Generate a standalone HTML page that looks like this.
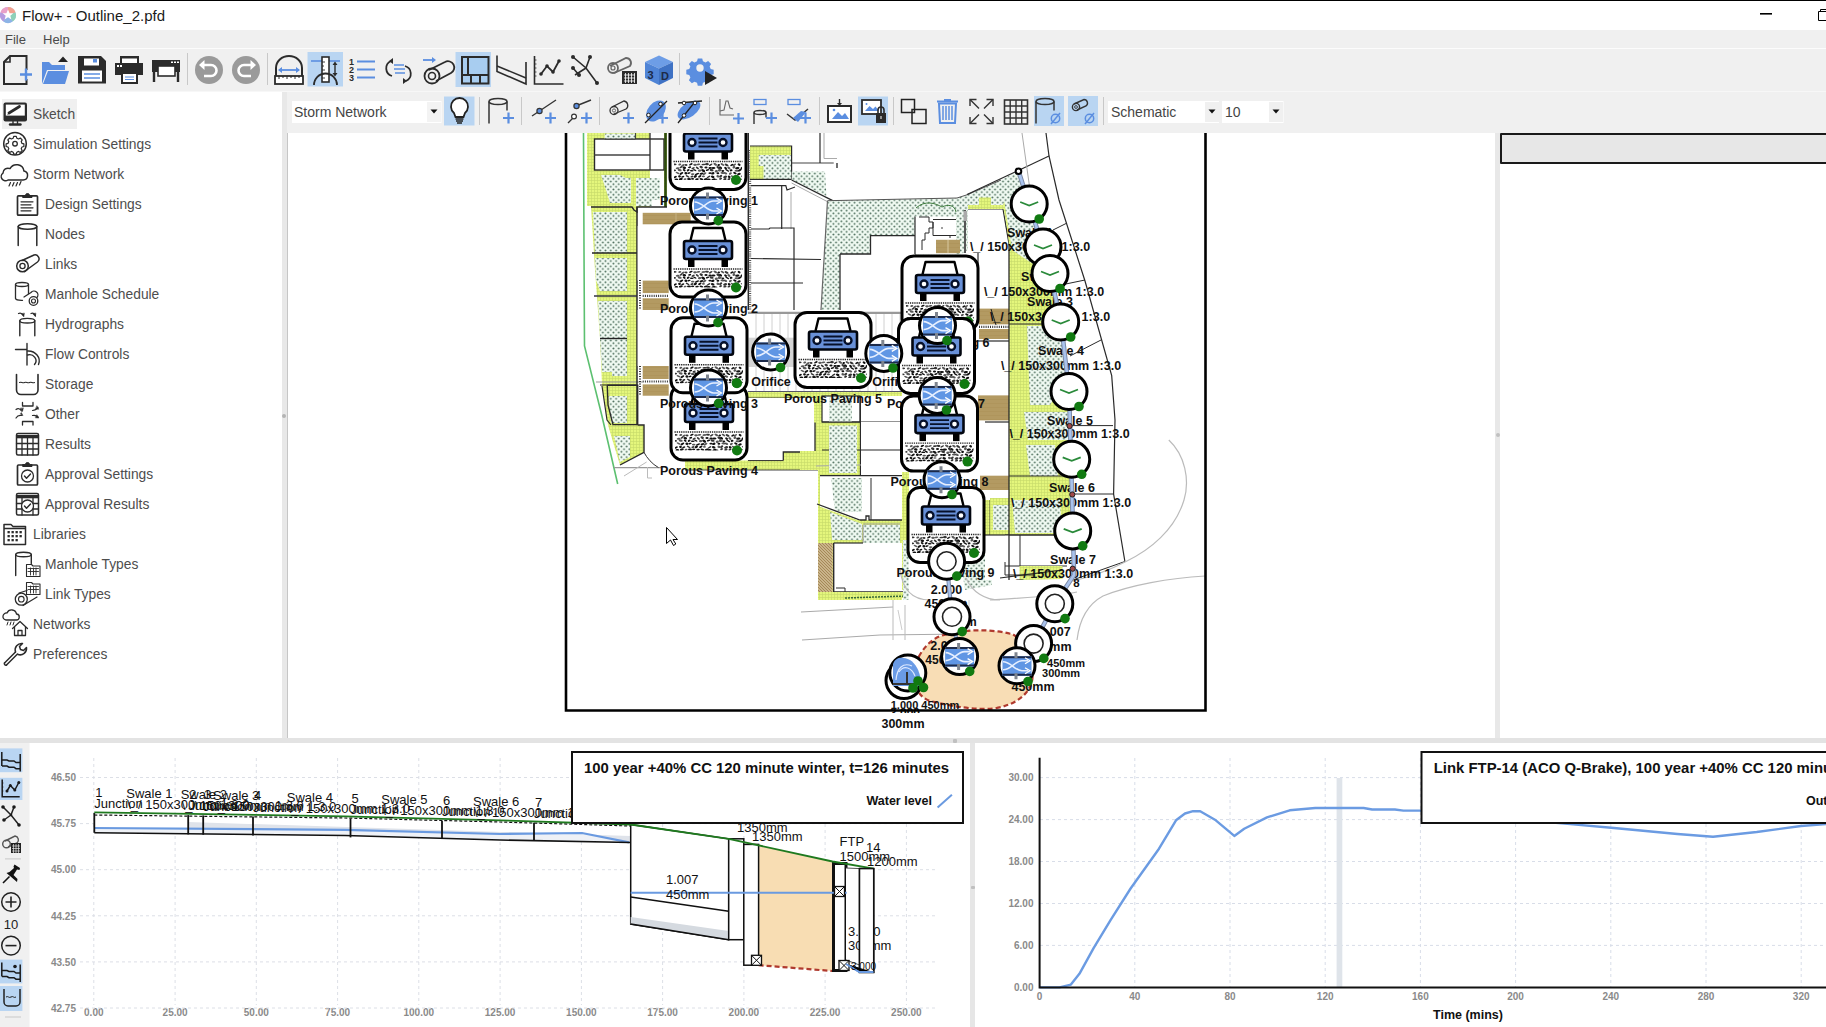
<!DOCTYPE html>
<html><head><meta charset="utf-8">
<style>
*{margin:0;padding:0;box-sizing:border-box}
html,body{width:1826px;height:1027px;overflow:hidden;background:#fff;font-family:"Liberation Sans",sans-serif;position:relative}
.a{position:absolute}
svg{position:absolute;overflow:visible}
svg text{font-family:"Liberation Sans",sans-serif}
.nav{font-size:14px;color:#4a4a4a;white-space:nowrap;line-height:16px}
</style></head><body>
<div class="a" style="left:0;top:0;width:1826px;height:30px;background:#fff;border-top:1px solid #000"></div>
<div class="a" style="left:0;top:30px;width:1826px;height:18px;background:#f0f0f0"></div>
<div class="a" style="left:0;top:48px;width:1826px;height:1px;background:#fcfcfc"></div>
<div class="a" style="left:0;top:49px;width:1826px;height:42px;background:#f0f0f0"></div>
<div class="a" style="left:0;top:91px;width:1826px;height:1px;background:#f7f7f7"></div>
<div class="a" style="left:0;top:92px;width:282px;height:646px;background:#fff"></div>
<div class="a" style="left:282px;top:92px;width:5px;height:646px;background:#e8e8e8"></div>
<div class="a" style="left:287px;top:92px;width:1539px;height:41px;background:#f0f0f0"></div>
<div class="a" style="left:287px;top:133px;width:1208px;height:605px;background:#fff"></div>
<div class="a" style="left:1495px;top:133px;width:5px;height:605px;background:#e8e8e8"></div>
<div class="a" style="left:1500px;top:133px;width:326px;height:605px;background:#fff"></div>
<div class="a" style="left:0;top:738px;width:1826px;height:5px;background:#e3e3e3"></div>
<div class="a" style="left:0;top:743px;width:970px;height:284px;background:#fff"></div>
<div class="a" style="left:970px;top:743px;width:5px;height:284px;background:#e6e6e6"></div>
<div class="a" style="left:975px;top:743px;width:851px;height:284px;background:#fff"></div>
<div class="a" style="left:287px;top:133px;width:1px;height:605px;background:#c6c6c6"></div>
<div class="a" style="left:282px;top:414px;width:4px;height:4px;border-radius:2px;background:#b4b4b4"></div>
<div class="a" style="left:1495.5px;top:433px;width:4px;height:4px;border-radius:2px;background:#c0c0c0"></div>
<div class="a" style="left:953px;top:738.5px;width:4px;height:4px;border-radius:1px;background:#c0c0c0"></div>
<div class="a" style="left:970.5px;top:885.5px;width:4px;height:3px;border-radius:1px;background:#c0c0c0"></div>

<svg style="left:0;top:0" width="1826" height="49" viewBox="0 0 1826 49">
<g transform="translate(8,15)">
<circle r="7.8" fill="#9fb7e0"/>
<path d="M0,0 L0,-8 A8,8 0 0 1 7.6,-2.5 Z" fill="#f2a08f"/>
<path d="M0,0 L7.6,-2.5 A8,8 0 0 1 4.7,6.5 Z" fill="#8fd0b8"/>
<path d="M0,0 L4.7,6.5 A8,8 0 0 1 -4.7,6.5 Z" fill="#8db4e6"/>
<path d="M0,0 L-4.7,6.5 A8,8 0 0 1 -7.6,-2.5 Z" fill="#b59be0"/>
<path d="M0,0 L-7.6,-2.5 A8,8 0 0 1 0,-8 Z" fill="#e9a0c8"/>
<path d="M0,-5.5 L1.6,-1.7 L5.3,-1.7 L2.3,0.8 L3.4,4.6 L0,2.3 L-3.4,4.6 L-2.3,0.8 L-5.3,-1.7 L-1.6,-1.7 Z" fill="#fff"/>
</g>
<text x="22" y="21" font-size="15" fill="#1a1a1a">Flow+ - Outline_2.pfd</text>
<rect x="1760" y="13" width="12" height="1.6" fill="#000"/>
<path d="M1818.5,11.5 h12 v9 h-12 z M1820.5,11.5 v-2 h12" fill="none" stroke="#000" stroke-width="1"/>
<text x="5" y="44" font-size="13" fill="#4a4a4a">File</text>
<text x="43" y="44" font-size="13" fill="#4a4a4a">Help</text>
</svg>

<div class="a" style="left:1.5px;top:99px;width:75px;height:30px;background:#f0f0f0"></div>
<svg style="left:0;top:92px" width="282" height="646" viewBox="0 92 282 646">
<text x="33" y="119" font-size="13.8" fill="#4d4d4d">Sketch</text>
<text x="33" y="149" font-size="13.8" fill="#4d4d4d">Simulation Settings</text>
<text x="33" y="179" font-size="13.8" fill="#4d4d4d">Storm Network</text>
<text x="45" y="209" font-size="13.8" fill="#4d4d4d">Design Settings</text>
<text x="45" y="239" font-size="13.8" fill="#4d4d4d">Nodes</text>
<text x="45" y="269" font-size="13.8" fill="#4d4d4d">Links</text>
<text x="45" y="299" font-size="13.8" fill="#4d4d4d">Manhole Schedule</text>
<text x="45" y="329" font-size="13.8" fill="#4d4d4d">Hydrographs</text>
<text x="45" y="359" font-size="13.8" fill="#4d4d4d">Flow Controls</text>
<text x="45" y="389" font-size="13.8" fill="#4d4d4d">Storage</text>
<text x="45" y="419" font-size="13.8" fill="#4d4d4d">Other</text>
<text x="45" y="449" font-size="13.8" fill="#4d4d4d">Results</text>
<text x="45" y="479" font-size="13.8" fill="#4d4d4d">Approval Settings</text>
<text x="45" y="509" font-size="13.8" fill="#4d4d4d">Approval Results</text>
<text x="33" y="539" font-size="13.8" fill="#4d4d4d">Libraries</text>
<text x="45" y="569" font-size="13.8" fill="#4d4d4d">Manhole Types</text>
<text x="45" y="599" font-size="13.8" fill="#4d4d4d">Link Types</text>
<text x="33" y="629" font-size="13.8" fill="#4d4d4d">Networks</text>
<text x="33" y="659" font-size="13.8" fill="#4d4d4d">Preferences</text>

<g fill="none" stroke="#2b2b2b" stroke-width="1.6" stroke-linecap="round" stroke-linejoin="round">
<!-- sketch monitor -->
<rect x="3.5" y="102.5" width="23.5" height="19" rx="2" fill="#2b2b2b" stroke="none"/>
<rect x="5.8" y="104.6" width="19" height="11" fill="#fff" stroke="none"/>
<path d="M10,124.5 h10.5" stroke-width="2.4"/><path d="M13,121.5 v2 M17.5,121.5 v2" stroke-width="1.4"/>
<path d="M9,113 L19.5,106.5" stroke-width="2.8"/><path d="M8,114.3 l1.6,-2" stroke-width="1"/>
<!-- gear circle -->
<circle cx="15" cy="143.7" r="11.3" stroke-width="1.5"/>
<circle cx="15" cy="143.7" r="2.3" stroke-width="1.3"/>
<path d="M13.7,136.3 h2.6 l0.5,1.9 l1.8,0.8 l1.7,-1 l1.9,1.9 l-1,1.7 l0.8,1.8 l1.9,0.5 v2.6 l-1.9,0.5 l-0.8,1.8 l1,1.7 l-1.9,1.9 l-1.7,-1 l-1.8,0.8 l-0.5,1.9 h-2.6 l-0.5,-1.9 l-1.8,-0.8 l-1.7,1 l-1.9,-1.9 l1,-1.7 l-0.8,-1.8 l-1.9,-0.5 v-2.6 l1.9,-0.5 l0.8,-1.8 l-1,-1.7 l1.9,-1.9 l1.7,1 l1.8,-0.8 Z" stroke-width="1.2"/>
<!-- cloud -->
<path d="M8,180 h15 a4.5,4.5 0 0 0 1,-8.9 a7.5,7.5 0 0 0 -14,-2.5 a5,5 0 0 0 -7,4.5 a4,4 0 0 0 5,6.9 Z" stroke-width="1.5"/>
<path d="M10.5,182.5 l-1.5,3.5 M14,182.5 l-1.5,3.5 M17.5,182.5 l-1.5,3.5 M21,181.5 l-1.5,3.5" stroke-width="1.2"/>
<!-- clipboard -->
<rect x="17.5" y="195.8" width="20" height="19.4" rx="1" stroke-width="1.7"/>
<path d="M23,197.5 h9 v-2 h-2.5 a2,2 0 0 0 -4,0 h-2.5 z" fill="#2b2b2b" stroke-width="1"/>
<path d="M21,201.8 h12 M21,204.8 h10 M21,207.8 h12 M21,210.8 h10" stroke-width="1.2"/>
<!-- cylinder -->
<ellipse cx="27.5" cy="226.5" rx="9.3" ry="2.8" stroke-width="1.5"/>
<path d="M18.2,226.5 v19 M36.8,226.5 v19" stroke-width="1.5"/>
<!-- links pipe -->
<path d="M22,260.5 L34,255 a4,4 0 0 1 3.5,7 L24.5,271.5" stroke-width="1.5"/>
<circle cx="22.5" cy="266" r="5.8" stroke-width="1.5"/><circle cx="22.5" cy="266" r="2.6" stroke-width="1.3"/>
<!-- manhole schedule -->
<ellipse cx="22" cy="284.5" rx="6.5" ry="2" stroke-width="1.3"/>
<path d="M15.5,284.5 v14 a6.5,2 0 0 0 7,1.8 M28.5,284.5 v10" stroke-width="1.3"/>
<path d="M24,297 L31,292.5 a3.5,3.5 0 0 1 6,5 L30,303" stroke-width="1.3" fill="#fff"/>
<circle cx="33.5" cy="301" r="4.3" fill="#fff" stroke-width="1.3"/><circle cx="33.5" cy="301" r="2" stroke-width="1.1"/>
<!-- hydrographs -->
<path d="M18.5,313.5 c2,-1 4,0 5,2.5 M31,313.5 c2,-1 4,0 4.5,2.5" stroke-width="1.2"/>
<path d="M21.5,314 l2.3,2.5 l0.5,-3 z M33,314 l2.3,2.5 l0.5,-3 z" fill="#2b2b2b" stroke-width="0.6"/>
<ellipse cx="27.3" cy="320.7" rx="7.5" ry="2.3" stroke-width="1.4"/>
<path d="M19.8,320.7 v15 M34.8,320.7 v15" stroke-width="1.4"/>
<!-- flow controls -->
<path d="M15.5,349.5 h11.5 M27,343.5 v21.5" stroke-width="1.4"/>
<path d="M27.5,351 a11,10 0 0 1 11,13.5 M27.5,355 a6.5,6 0 0 1 7,9.5" stroke-width="1.4"/>
<!-- storage -->
<path d="M16.5,374.5 v15.5 a4.5,4.5 0 0 0 4.5,4.5 h12.5 a4.5,4.5 0 0 0 4.5,-4.5 v-15.5" stroke-width="1.6"/>
<path d="M19.5,382.5 c2,-1 3,1 5,0 c2,-1 3,1 5,0 c2,-1 3,1 5,0" stroke-width="1.1"/>
<!-- other -->
<path d="M22.5,402.5 v3.5 h10.5 v-3.5 M22.5,425 v-3.5 h10.5 v3.5" stroke-width="1.3"/>
<path d="M16,409.5 c2,-1.5 4,-1 5.5,1.5 M16,418 c1.5,-2.5 3.5,-3 5.5,-2.5 M32.5,410.5 c2,0 4,-1 5.5,-3 M32.5,415.5 c2,-0.5 4,0 5.5,1.5" stroke-width="1.2"/><path d="M20.5,408.5 l2,3 l0.8,-3.3 z M20.5,414 l2.5,1.8 l-1.5,-3 z M37,406 l1.8,3.2 l-3,-0.2 z M37,415 l1.8,3 l-3.2,-0.2 z" fill="#2b2b2b" stroke-width="0.5"/>
<!-- results grid -->
<rect x="16.5" y="433.5" width="22" height="21.5" rx="1.5" stroke-width="1.5"/>
<path d="M16.5,435 h22 v3.3 h-22 z" fill="#2b2b2b" stroke="none"/>
<path d="M16.5,443.5 h22 M16.5,449 h22 M22,438 v17 M27.5,438 v17 M33,438 v17" stroke-width="1.3"/>
<!-- approval settings -->
<rect x="17.5" y="465" width="20" height="20" rx="1" stroke-width="1.7"/>
<path d="M23,466.5 h9 v-2 h-2.5 a2,2 0 0 0 -4,0 h-2.5 z" fill="#2b2b2b" stroke-width="1"/>
<circle cx="27.5" cy="476" r="6" stroke-width="1.3"/><path d="M24.5,476 l2,2.3 l4,-4.3" stroke-width="1.4"/>
<!-- approval results -->
<rect x="16.5" y="493.5" width="22" height="21.5" rx="1.5" stroke-width="1.5"/>
<path d="M16.5,495 h22 v3.3 h-22 z" fill="#2b2b2b" stroke="none"/>
<path d="M16.5,503.5 h22 M16.5,509 h22 M22,498 v17 M33,498 v17" stroke-width="1.3"/>
<circle cx="27.5" cy="506" r="6" fill="#fff" stroke-width="1.3"/><path d="M24.5,506 l2,2.3 l4,-4.3" stroke-width="1.4"/>
<!-- libraries -->
<path d="M4,544.5 v-20 h7 l2,2 h12.5 v18 z M4,528.5 h21.5" stroke-width="1.5"/>
<g fill="#2b2b2b" stroke="none"><rect x="7.5" y="531" width="2.3" height="2.3"/><rect x="11.5" y="531" width="2.3" height="2.3"/><rect x="15.5" y="531" width="2.3" height="2.3"/><rect x="19.5" y="531" width="2.3" height="2.3"/><rect x="7.5" y="535" width="2.3" height="2.3"/><rect x="11.5" y="535" width="2.3" height="2.3"/><rect x="15.5" y="535" width="2.3" height="2.3"/><rect x="19.5" y="535" width="2.3" height="2.3"/><rect x="7.5" y="539" width="2.3" height="2.3"/><rect x="11.5" y="539" width="2.3" height="2.3"/><rect x="15.5" y="539" width="2.3" height="2.3"/></g>
<!-- manhole types -->
<ellipse cx="23.5" cy="554.5" rx="7.8" ry="2.3" stroke-width="1.4"/>
<path d="M15.7,554.5 v21 M31.3,554.5 v9" stroke-width="1.4"/>
<path d="M26.5,576.5 v-12 h5 l1.5,1.5 h7 v10.5 z" fill="#fff" stroke-width="1.1"/>
<path d="M28,568.5 h10.5 M28,571.5 h10.5 M30.5,568 v7 M33.5,568 v7 M36,568 v7" stroke-width="0.9"/>
<!-- link types -->
<path d="M26.5,594.5 v-12 h5 l1.5,1.5 h7 v10.5 z" fill="#fff" stroke-width="1.1"/>
<path d="M28,586.5 h10.5 M28,589.5 h10.5 M30.5,586 v7 M33.5,586 v7 M36,586 v7" stroke-width="0.9"/>
<path d="M19,593 L27,590.5 M23,605.5 L37,597" stroke-width="1.2"/>
<circle cx="21.3" cy="599.2" r="6" stroke-width="1.3"/><circle cx="21.3" cy="599.2" r="2.8" stroke-width="1.1"/>
<!-- networks -->
<path d="M6,620 h10 a3,3 0 0 0 0.5,-6 a5,5 0 0 0 -9.5,-1 a3.2,3.2 0 0 0 -1,7 z" stroke-width="1.3"/>
<path d="M8,622 l-1,3 M11,622 l-1,3 M14,622 l-1,3" stroke-width="1"/>
<path d="M12.5,628.5 L20,621.5 L27.5,628.5 M14.5,626.5 v9 h11 v-9 M18,635.5 v-5 h4 v5" stroke-width="1.3"/>
<!-- preferences wrench -->
<path d="M4.5,663 L15.5,652 M6.5,665 L17.5,654" stroke-width="1.5"/>
<path d="M4.5,663 a1.5,1.5 0 0 0 2,2" stroke-width="1.5"/>
<path d="M15.5,652 a6.5,6.5 0 0 1 7,-8.5 l-3,3 l1,3 l3,1 l3,-3 a6.5,6.5 0 0 1 -8.5,7" stroke-width="1.5"/>
</g>
</svg>

<svg style="left:0;top:49px" width="1826" height="43" viewBox="0 49 1826 43">
<!-- highlights -->
<rect x="307.5" y="52" width="35.5" height="34.5" fill="#b9d5f2"/>
<rect x="455.5" y="52" width="35.5" height="35" fill="#b9d5f2"/>
<!-- separators -->
<rect x="187" y="53" width="1" height="32" fill="#c8c8c8"/>
<rect x="267" y="53" width="1" height="32" fill="#c8c8c8"/>
<rect x="679" y="53" width="1" height="32" fill="#c8c8c8"/>
<!-- new doc -->
<path d="M4,62 L10,56 L26.5,56 L26.5,84 L4,84 Z" fill="none" stroke="#2b2b2b" stroke-width="2"/>
<path d="M4,62 L10,62 L10,56" fill="none" stroke="#2b2b2b" stroke-width="1.6"/>
<rect x="19" y="70" width="13" height="9" fill="#f0f0f0"/>
<path d="M20,74.5 h12 M26,68.5 v12" stroke="#5b8ee0" stroke-width="2.4"/>
<!-- open folder -->
<path d="M42,84 L42,62 L49,62 L52,65 L65,65 L65,70 L47,70 L42,84 Z" fill="#5b8ee0"/>
<path d="M43,84 L48,71 L69,71 L65,84 Z" fill="#5b8ee0"/>
<path d="M58,62 L63,56.5 L68,62 Z" fill="#222"/>
<!-- save -->
<path d="M78,56 L101,56 L106,61 L106,83.5 L78,83.5 Z" fill="#2b2b2b"/>
<rect x="84" y="58.5" width="15" height="7" fill="#fff"/>
<rect x="93" y="59" width="4" height="3.5" fill="#5b8ee0"/>
<rect x="82" y="70.5" width="20" height="11" fill="#fff"/>
<path d="M84,74 h16 M84,78 h16" stroke="#5b8ee0" stroke-width="1.6"/>
<!-- print -->
<rect x="120" y="56" width="19" height="7" fill="#2b2b2b"/>
<rect x="122" y="58.5" width="15" height="4.5" fill="#fff"/>
<rect x="115" y="63" width="28" height="12" fill="#2b2b2b"/>
<rect x="117" y="65" width="2" height="2" fill="#fff"/><rect x="120" y="65" width="2" height="2" fill="#fff"/>
<rect x="121" y="71" width="17" height="13" fill="#2b2b2b"/>
<rect x="123" y="74" width="13" height="8" fill="#fff"/>
<path d="M125,77 h9 M125,79.5 h9" stroke="#5b8ee0" stroke-width="1.2"/>
<!-- plotter -->
<rect x="152" y="60" width="28" height="12" fill="#2b2b2b"/>
<rect x="171" y="61.5" width="2" height="1.5" fill="#fff"/><rect x="174" y="61.5" width="2" height="1.5" fill="#fff"/><rect x="177" y="61.5" width="2" height="1.5" fill="#fff"/>
<rect x="158" y="66" width="17" height="10" fill="#fff" stroke="#2b2b2b" stroke-width="1.6"/>
<path d="M154,72 v10 M178,72 v10" stroke="#2b2b2b" stroke-width="2.4"/>
<!-- undo / redo -->
<circle cx="209" cy="70" r="14" fill="#9a9a9a"/>
<path d="M202,65 h9 a5.5,5.5 0 0 1 0,11 h-7" fill="none" stroke="#fff" stroke-width="2.6"/>
<path d="M199,65 L204.5,60 L204.5,70 Z" fill="#fff"/>
<circle cx="246" cy="70" r="14" fill="#9a9a9a"/>
<path d="M253,65 h-9 a5.5,5.5 0 0 0 0,11 h7" fill="none" stroke="#fff" stroke-width="2.6"/>
<path d="M256,65 L250.5,60 L250.5,70 Z" fill="#fff"/>
<!-- measure dome -->
<path d="M276,76 L276,68 A13,12 0 0 1 302,68 L302,76" fill="none" stroke="#2b2b2b" stroke-width="2"/>
<rect x="275" y="76" width="28" height="8" fill="#fff" stroke="#2b2b2b" stroke-width="1.8"/>
<path d="M279,76 v3 M283,76 v2 M287,76 v3 M291,76 v2 M295,76 v3 M299,76 v2" stroke="#2b2b2b" stroke-width="1"/>
<path d="M279,70 h20" stroke="#5b8ee0" stroke-width="1.8"/>
<path d="M278,70 l4,-3 v6 z M300,70 l-4,-3 v6 z" fill="#5b8ee0"/>
<!-- ruler (highlighted) -->
<path d="M311,61 h29" stroke="#5b8ee0" stroke-width="1.6"/>
<rect x="322" y="57" width="7" height="25" fill="#fff" stroke="#2b2b2b" stroke-width="1.6"/>
<path d="M322,62 h3 M322,66 h2 M322,70 h3 M322,74 h2 M322,78 h3" stroke="#2b2b2b" stroke-width="0.9"/>
<path d="M314,85 A11,11 0 0 1 337,85" fill="none" stroke="#2b2b2b" stroke-width="1.8"/>
<path d="M335,63 v12" stroke="#2b2b2b" stroke-width="1.4"/>
<path d="M332.5,65 L335,61.5 L337.5,65 Z M332.5,73 L335,76.5 L337.5,73 Z" fill="#2b2b2b"/>
<!-- numbered list -->
<text x="349" y="65" font-size="9" font-weight="bold" fill="#2b2b2b">1</text>
<text x="349" y="73" font-size="9" font-weight="bold" fill="#2b2b2b">2</text>
<text x="349" y="81" font-size="9" font-weight="bold" fill="#2b2b2b">3</text>
<path d="M357,61.5 h18 M357,69.5 h18 M357,77.5 h18" stroke="#5b8ee0" stroke-width="2"/>
<!-- link loop -->
<path d="M391,61 A8,8 0 0 0 392,76" fill="none" stroke="#2b2b2b" stroke-width="1.8"/>
<path d="M405,66 A8,8 0 0 1 406,81" fill="none" stroke="#2b2b2b" stroke-width="1.8"/>
<path d="M389,61 l4,-3 v6z M407,81 l-4,-3 v6z" fill="#2b2b2b"/>
<path d="M394,65 h10 M394,69 h11 M395,73 h10" stroke="#5b8ee0" stroke-width="1.6"/>
<!-- pipe w arrow -->
<path d="M423,60 h10" stroke="#5b8ee0" stroke-width="1.8"/><path d="M432,57 l4,3 l-4,3z" fill="#5b8ee0"/>
<path d="M429,70 L445,62 A6,6 0 0 1 451,73 L436,81" fill="none" stroke="#2b2b2b" stroke-width="1.8"/>
<circle cx="432" cy="76" r="7.5" fill="none" stroke="#2b2b2b" stroke-width="1.8"/>
<circle cx="432" cy="76" r="3.5" fill="none" stroke="#2b2b2b" stroke-width="1.6"/>
<!-- layout (highlighted) -->
<rect x="462" y="57" width="26.5" height="26.5" fill="#a8cdf0" stroke="#2b2b2b" stroke-width="2"/>
<path d="M468,57 v18.5 M462,75 h26.5 M471,75 v8.5 M480,75 v8.5" stroke="#2b2b2b" stroke-width="2"/>
<!-- profile -->
<path d="M497,55.5 v16 L526,84 v-22" fill="none" stroke="#2b2b2b" stroke-width="1.6"/>
<path d="M497,66 L526,78" stroke="#2b2b2b" stroke-width="1.4"/>
<!-- chart -->
<path d="M534.5,56 v28 h29" fill="none" stroke="#2b2b2b" stroke-width="1.6"/>
<path d="M534.5,60 h2 M534.5,64 h2 M534.5,68 h2 M534.5,72 h2 M534.5,76 h2" stroke="#2b2b2b" stroke-width="0.8"/>
<path d="M541,74 L547,66 L553,72 L559,61" fill="none" stroke="#2b2b2b" stroke-width="1.8"/>
<circle cx="541" cy="74" r="1.8" fill="#2b2b2b"/><circle cx="547" cy="66" r="1.8" fill="#2b2b2b"/><circle cx="553" cy="72" r="1.8" fill="#2b2b2b"/><circle cx="559" cy="61" r="1.8" fill="#2b2b2b"/>
<!-- network -->
<path d="M573,57 L586,68 L597,83 M586,68 L590,57 M586,68 L575,75 M573,68 L579,75" fill="none" stroke="#2b2b2b" stroke-width="1.6"/>
<circle cx="573" cy="57" r="2" fill="#2b2b2b"/><circle cx="590" cy="57" r="2" fill="#2b2b2b"/>
<circle cx="573" cy="68" r="2" fill="#2b2b2b"/><circle cx="579" cy="75" r="2" fill="#2b2b2b"/>
<circle cx="597" cy="83" r="2" fill="#2b2b2b"/>
<!-- pipe calendar -->
<path d="M610,66 L626,58 A5,5 0 0 1 630,66 L614,73" fill="none" stroke="#666" stroke-width="1.8"/>
<circle cx="613" cy="68" r="5" fill="none" stroke="#666" stroke-width="1.8"/><circle cx="613" cy="68" r="2" fill="none" stroke="#666" stroke-width="1.2"/>
<rect x="622" y="71" width="15" height="13" fill="#2b2b2b"/>
<path d="M624,75 h11 M624,78 h11 M624,81 h11 M625.5,73 v10 M628.5,73 v10 M631.5,73 v10 M634.5,73 v10" stroke="#fff" stroke-width="0.8"/>
<!-- 3D cube -->
<path d="M659,55.5 L673,62 L659,68.5 L645,62 Z" fill="#6d9de6"/>
<path d="M645,62 L659,68.5 L659,85 L645,78 Z" fill="#4f84d6"/>
<path d="M673,62 L659,68.5 L659,85 L673,78 Z" fill="#3f72c4"/>
<text x="647.5" y="79" font-size="11" font-weight="bold" fill="#1d2a48">3</text>
<text x="661" y="80" font-size="11" font-weight="bold" fill="#1d2a48">D</text>
<!-- gear play -->
<g transform="translate(700,68) scale(0.74)">
<path d="M-3,-13 h6 l1,4 l3.5,1.5 l3.5,-2 l4,4 l-2,3.5 l1.5,3.5 l4,1 v6 l-4,1 l-1.5,3.5 l2,3.5 l-4,4 l-3.5,-2 l-3.5,1.5 l-1,4 h-6 l-1,-4 l-3.5,-1.5 l-3.5,2 l-4,-4 l2,-3.5 l-1.5,-3.5 l-4,-1 v-6 l4,-1 l1.5,-3.5 l-2,-3.5 l4,-4 l3.5,2 l3.5,-1.5 Z" fill="#5b8ee0"/>
<circle r="5" fill="#f0f0f0"/>
</g>
<path d="M705,71 L717,78 L705,85 Z" fill="#222"/>
</svg>

<svg style="left:287px;top:92px" width="1539" height="41" viewBox="287 92 1539 41">
<!-- dropdowns -->
<rect x="292" y="101" width="149.5" height="22" fill="#fff"/>
<rect x="427" y="102" width="14" height="20" fill="#f3f3f3"/>
<path d="M430.5,109.5 h7 l-3.5,4 z" fill="#111"/>
<text x="294" y="116.5" font-size="14" fill="#454545">Storm Network</text>
<rect x="1108" y="101" width="111" height="22" fill="#fff"/>
<rect x="1205" y="102" width="14" height="20" fill="#f0f0f0"/>
<path d="M1208.5,109.5 h7 l-3.5,4 z" fill="#111"/>
<text x="1111" y="116.5" font-size="14" fill="#454545">Schematic</text>
<rect x="1222" y="101" width="61.5" height="22" fill="#fff"/>
<rect x="1269" y="102" width="14" height="20" fill="#f0f0f0"/>
<path d="M1272.5,109.5 h7 l-3.5,4 z" fill="#111"/>
<text x="1225" y="116.5" font-size="14" fill="#454545">10</text>
<!-- highlights -->
<rect x="444" y="96.5" width="30.5" height="29" fill="#b9d5f2"/>
<rect x="858" y="96.5" width="30" height="29" fill="#b9d5f2"/>
<rect x="1034" y="96" width="30" height="30" fill="#b9d5f2"/>
<rect x="1068" y="96" width="30" height="30" fill="#b9d5f2"/>
<!-- separators -->
<g fill="#c8c8c8"><rect x="479" y="97" width="1" height="28"/><rect x="521" y="97" width="1" height="28"/><rect x="599" y="97" width="1" height="28"/><rect x="709" y="97" width="1" height="28"/><rect x="819" y="97" width="1" height="28"/><rect x="893" y="97" width="1" height="28"/><rect x="1103" y="97" width="1" height="28"/></g>
<!-- bulb -->
<path d="M454,113 A8.5,8.5 0 1 1 465,113 L463.5,117 h-8 Z" fill="#fff" stroke="#222" stroke-width="1.8"/>
<path d="M455.5,119 h8 M456,121 h7" stroke="#222" stroke-width="1.3"/><path d="M457,123 h5" stroke="#222" stroke-width="1.5"/>
<!-- node + -->
<ellipse cx="498" cy="101.5" rx="9" ry="3" fill="none" stroke="#333" stroke-width="1.5"/>
<path d="M489,101.5 v22 M507,101.5 v9" stroke="#333" stroke-width="1.5"/>
<path d="M503,118 h11 M508.5,112.5 v11" stroke="#5b8ee0" stroke-width="2.2"/>
<!-- link + -->
<path d="M532,116 L556,100" stroke="#333" stroke-width="1.4"/><circle cx="539.5" cy="111" r="2.6" fill="#5b8ee0" stroke="#333" stroke-width="1.2"/>
<path d="M545,118 h11 M550.5,112.5 v11" stroke="#5b8ee0" stroke-width="2.2"/>
<!-- link node + -->
<path d="M576,106 L591,100 M568,123 L575,116" stroke="#333" stroke-width="1.4"/><circle cx="576.5" cy="106" r="2.6" fill="#5b8ee0" stroke="#333" stroke-width="1.2"/><circle cx="574" cy="116.5" r="2.4" fill="#fff" stroke="#333" stroke-width="1.2"/>
<path d="M581,118 h11 M586.5,112.5 v11" stroke="#5b8ee0" stroke-width="2.2"/>
<!-- pipe + -->
<path d="M612,107 L624,101 A4.5,4.5 0 0 1 626,109 L614,114" fill="none" stroke="#333" stroke-width="1.3"/>
<circle cx="614" cy="110.5" r="4" fill="none" stroke="#333" stroke-width="1.3"/><circle cx="614" cy="110.5" r="1.6" fill="none" stroke="#555" stroke-width="0.9"/>
<path d="M623,118 h11 M628.5,112.5 v11" stroke="#5b8ee0" stroke-width="2.2"/>
<!-- ellipse link + -->
<ellipse cx="656" cy="111" rx="8" ry="12" transform="rotate(40 656 111)" fill="#5b8ee0"/>
<path d="M645,123 L667,101" stroke="#222" stroke-width="1.3"/><circle cx="648.5" cy="115" r="1.8" fill="#fff" stroke="#222"/><circle cx="660.5" cy="104" r="1.8" fill="#fff" stroke="#222"/>
<path d="M657,118 h11 M662.5,112.5 v11" stroke="#5b8ee0" stroke-width="2.2"/>
<!-- ellipse 2 -->
<ellipse cx="689" cy="110" rx="7" ry="13" transform="rotate(55 689 110)" fill="#5b8ee0"/>
<path d="M678,123 L694,103 M678,103 L702,101" stroke="#222" stroke-width="1.3"/><circle cx="684" cy="115.5" r="1.8" fill="#fff" stroke="#222"/><circle cx="684" cy="103" r="1.8" fill="#fff" stroke="#222"/><circle cx="695" cy="103" r="1.8" fill="#fff" stroke="#222"/>
<!-- hydrograph + -->
<path d="M720,99 v16 h14" fill="none" stroke="#666" stroke-width="1.1"/><path d="M720,111 L724,110 L726,101 L728,101 L730,108 L733,109" fill="none" stroke="#666" stroke-width="1.1"/>
<path d="M733,118.5 h11 M738.5,113 v11" stroke="#5b8ee0" stroke-width="2.2"/>
<!-- node rect + -->
<rect x="754" y="99.5" width="12" height="5" fill="none" stroke="#5b8ee0" stroke-width="1.3"/>
<ellipse cx="760" cy="112.5" rx="6" ry="2" fill="none" stroke="#333" stroke-width="1.4"/><path d="M754,112.5 v11.5 M766,112.5 v5" fill="none" stroke="#333" stroke-width="1.4"/>
<path d="M766,118 h11 M771.5,112.5 v11" stroke="#5b8ee0" stroke-width="2.2"/>
<!-- swale + -->
<rect x="788" y="99.5" width="12" height="5" fill="none" stroke="#5b8ee0" stroke-width="1.3"/>
<path d="M787,114 L795,120 L808,109" fill="none" stroke="#333" stroke-width="1.4"/><path d="M793,118 L798,122 L806,112 L801,111 Z" fill="#5b8ee0"/>
<path d="M800,118 h11 M805.5,112.5 v11" stroke="#5b8ee0" stroke-width="2.2"/>
<!-- image import -->
<rect x="828" y="106" width="23" height="16" fill="#fff" stroke="#2b2b2b" stroke-width="2"/>
<path d="M832,119 L838,112 L842,116 L845,113 L849,119 Z" fill="#5b8ee0"/><circle cx="834" cy="110" r="1.3" fill="#5b8ee0"/>
<path d="M839.5,99 v5" stroke="#2b2b2b" stroke-width="1.4"/><path d="M837,103 h5 l-2.5,3 z" fill="#2b2b2b"/>
<!-- image lock -->
<rect x="862" y="100" width="19" height="14" fill="#fff" stroke="#2b2b2b" stroke-width="1.8"/>
<path d="M865,111 L869.5,106 L873,109 L875.5,106.5 L879,111 Z" fill="#5b8ee0"/><circle cx="866.5" cy="104" r="1" fill="#5b8ee0"/>
<rect x="876" y="113" width="10" height="10" fill="#2b2b2b"/><path d="M878,113 v-3 a3,3 0 0 1 6,0 v3" fill="none" stroke="#2b2b2b" stroke-width="1.6"/>
<rect x="880.5" y="116" width="1" height="3" fill="#fff"/>
<!-- overlap squares -->
<rect x="901.5" y="99.5" width="13" height="13" fill="none" stroke="#222" stroke-width="1.5"/>
<rect x="912" y="109.5" width="14" height="14" fill="#f0f0f0" stroke="#222" stroke-width="1.5"/>
<path d="M912,112.5 h2.5 v-3" fill="none" stroke="#222" stroke-width="1.5"/>
<!-- trash -->
<path d="M937,101.5 h21 M944,100 h7" stroke="#5b8ee0" stroke-width="2"/>
<path d="M939,103.5 h17 l-1,19.5 h-15 z" fill="none" stroke="#5b8ee0" stroke-width="2"/>
<path d="M943,106 v14 M946,106 v14 M949,106 v14 M952,106 v14" stroke="#5b8ee0" stroke-width="1.5"/>
<!-- expand -->
<path d="M970,99.5 L979,108.5 M993,99.5 L984,108.5 M970,123.5 L979,114.5 M993,123.5 L984,114.5" stroke="#333" stroke-width="1.4"/>
<path d="M970,106 v-6.5 h6.5 M986.5,99.5 h6.5 v6.5 M970,117 v6.5 h6.5 M986.5,123.5 h6.5 v-6.5" fill="none" stroke="#333" stroke-width="1.4"/>
<!-- grid -->
<rect x="1004.5" y="100" width="23" height="24" fill="none" stroke="#333" stroke-width="1.6"/>
<path d="M1010.2,100 v24 M1016,100 v24 M1021.7,100 v24 M1004.5,106 h23 M1004.5,112 h23 M1004.5,118 h23" stroke="#333" stroke-width="1.4"/>
<!-- node o -->
<ellipse cx="1045" cy="101.5" rx="9" ry="3" fill="none" stroke="#333" stroke-width="1.5"/>
<path d="M1036,101.5 v22 M1054,101.5 v9" stroke="#333" stroke-width="1.5"/>
<circle cx="1055.5" cy="118.5" r="4.2" fill="none" stroke="#5b8ee0" stroke-width="1.5"/><path d="M1051,124 L1060,113" stroke="#5b8ee0" stroke-width="1.5"/>
<!-- link o -->
<path d="M1074,104 L1084,99.5 A3.6,3.6 0 0 1 1086,106 L1077,110" fill="none" stroke="#333" stroke-width="1.4"/>
<circle cx="1076" cy="107" r="3.6" fill="none" stroke="#333" stroke-width="1.4"/><circle cx="1076" cy="107" r="1.4" fill="none" stroke="#333" stroke-width="0.9"/>
<circle cx="1089.5" cy="118.5" r="4.2" fill="none" stroke="#5b8ee0" stroke-width="1.5"/><path d="M1085,124 L1094,113" stroke="#5b8ee0" stroke-width="1.5"/>
</svg>

<svg style="left:565px;top:133px" width="643" height="605" viewBox="565 133 643 605">
<defs>
<pattern id="grid" width="3" height="3" patternUnits="userSpaceOnUse"><rect width="3" height="3" fill="#e4f67c"/><path d="M0,0.5 h3 M0.5,0 v3" stroke="#c6da6a" stroke-width="0.6"/></pattern>
<pattern id="dots" width="5.3" height="5.3" patternUnits="userSpaceOnUse"><rect width="5.3" height="5.3" fill="#f0faf2"/><circle cx="1.3" cy="1.3" r="0.95" fill="#4d6e5c"/><circle cx="3.95" cy="3.95" r="0.95" fill="#4d6e5c"/></pattern>
<pattern id="brown" width="6" height="4" patternUnits="userSpaceOnUse"><rect width="6" height="4" fill="#b39a62"/><path d="M0,3.8 h6" stroke="#a58a50" stroke-width="0.5"/></pattern>
<pattern id="brownh" width="3" height="3" patternUnits="userSpaceOnUse"><rect width="3" height="3" fill="#c9b48a"/><path d="M0,0 l3,3" stroke="#9c7c4a" stroke-width="0.8"/></pattern>
<g id="gravel"><ellipse cx="0.7" cy="1.4" rx="1.9" ry="0.8" opacity="0.85" transform="rotate(3 0.7 1.4)"/><ellipse cx="5.8" cy="1.5" rx="1.5" ry="1.0" opacity="0.7" transform="rotate(-18 5.8 1.5)"/><ellipse cx="8.9" cy="2.3" rx="1.9" ry="1.0" opacity="0.7" transform="rotate(-31 8.9 2.3)"/><ellipse cx="12.0" cy="1.9" rx="1.5" ry="1.0" opacity="0.85" transform="rotate(3 12.0 1.9)"/><ellipse cx="16.9" cy="1.3" rx="1.9" ry="0.9" opacity="1" transform="rotate(-28 16.9 1.3)"/><ellipse cx="21.0" cy="1.8" rx="1.8" ry="1.1" opacity="0.7" transform="rotate(-2 21.0 1.8)"/><ellipse cx="24.4" cy="1.4" rx="2.0" ry="0.8" opacity="0.7" transform="rotate(-14 24.4 1.4)"/><ellipse cx="29.6" cy="1.5" rx="2.2" ry="0.8" opacity="0.85" transform="rotate(-6 29.6 1.5)"/><ellipse cx="33.0" cy="1.2" rx="1.9" ry="1.1" opacity="0.85" transform="rotate(5 33.0 1.2)"/><ellipse cx="36.7" cy="1.8" rx="2.0" ry="0.8" opacity="0.85" transform="rotate(-28 36.7 1.8)"/><ellipse cx="41.3" cy="1.3" rx="2.0" ry="1.1" opacity="0.7" transform="rotate(35 41.3 1.3)"/><ellipse cx="44.7" cy="2.0" rx="1.4" ry="1.0" opacity="1" transform="rotate(-23 44.7 2.0)"/><ellipse cx="48.5" cy="1.5" rx="2.0" ry="1.0" opacity="0.7" transform="rotate(29 48.5 1.5)"/><ellipse cx="52.6" cy="1.9" rx="2.1" ry="1.1" opacity="0.85" transform="rotate(25 52.6 1.9)"/><ellipse cx="57.8" cy="2.0" rx="1.7" ry="0.9" opacity="1" transform="rotate(-29 57.8 2.0)"/><ellipse cx="60.4" cy="1.8" rx="1.9" ry="0.9" opacity="0.7" transform="rotate(-35 60.4 1.8)"/><ellipse cx="65.1" cy="1.6" rx="1.5" ry="1.1" opacity="1" transform="rotate(32 65.1 1.6)"/><ellipse cx="3.6" cy="5.2" rx="1.9" ry="1.0" opacity="0.7" transform="rotate(-7 3.6 5.2)"/><ellipse cx="6.9" cy="4.2" rx="1.5" ry="0.9" opacity="0.85" transform="rotate(-24 6.9 4.2)"/><ellipse cx="10.3" cy="4.8" rx="1.8" ry="1.2" opacity="1" transform="rotate(8 10.3 4.8)"/><ellipse cx="15.6" cy="4.3" rx="1.6" ry="0.9" opacity="1" transform="rotate(-10 15.6 4.3)"/><ellipse cx="19.1" cy="5.3" rx="1.8" ry="0.9" opacity="0.85" transform="rotate(-25 19.1 5.3)"/><ellipse cx="23.4" cy="4.9" rx="1.8" ry="0.9" opacity="0.85" transform="rotate(32 23.4 4.9)"/><ellipse cx="27.2" cy="4.1" rx="1.8" ry="1.2" opacity="0.85" transform="rotate(25 27.2 4.1)"/><ellipse cx="32.0" cy="4.5" rx="1.6" ry="1.0" opacity="1" transform="rotate(0 32.0 4.5)"/><ellipse cx="36.0" cy="5.0" rx="1.6" ry="0.9" opacity="1" transform="rotate(-7 36.0 5.0)"/><ellipse cx="39.3" cy="5.0" rx="2.2" ry="1.1" opacity="1" transform="rotate(-2 39.3 5.0)"/><ellipse cx="44.3" cy="4.6" rx="2.1" ry="1.2" opacity="0.85" transform="rotate(32 44.3 4.6)"/><ellipse cx="46.6" cy="4.7" rx="1.7" ry="1.0" opacity="1" transform="rotate(34 46.6 4.7)"/><ellipse cx="51.6" cy="5.1" rx="1.5" ry="1.1" opacity="1" transform="rotate(29 51.6 5.1)"/><ellipse cx="54.9" cy="5.0" rx="1.7" ry="1.1" opacity="0.7" transform="rotate(33 54.9 5.0)"/><ellipse cx="59.9" cy="4.2" rx="1.5" ry="1.2" opacity="0.7" transform="rotate(-33 59.9 4.2)"/><ellipse cx="63.3" cy="5.1" rx="2.2" ry="1.1" opacity="1" transform="rotate(-10 63.3 5.1)"/><ellipse cx="68.0" cy="5.0" rx="1.5" ry="1.1" opacity="1" transform="rotate(-25 68.0 5.0)"/><ellipse cx="0.5" cy="7.3" rx="1.6" ry="0.9" opacity="0.85" transform="rotate(6 0.5 7.3)"/><ellipse cx="5.7" cy="7.1" rx="2.0" ry="1.2" opacity="0.7" transform="rotate(11 5.7 7.1)"/><ellipse cx="10.2" cy="7.2" rx="1.5" ry="1.0" opacity="1" transform="rotate(26 10.2 7.2)"/><ellipse cx="14.2" cy="7.2" rx="1.5" ry="1.0" opacity="1" transform="rotate(-27 14.2 7.2)"/><ellipse cx="17.7" cy="7.7" rx="2.0" ry="0.8" opacity="1" transform="rotate(4 17.7 7.7)"/><ellipse cx="20.8" cy="7.1" rx="1.8" ry="0.8" opacity="1" transform="rotate(28 20.8 7.1)"/><ellipse cx="25.7" cy="7.6" rx="1.8" ry="1.1" opacity="0.7" transform="rotate(-3 25.7 7.6)"/><ellipse cx="29.2" cy="7.6" rx="2.1" ry="1.2" opacity="1" transform="rotate(30 29.2 7.6)"/><ellipse cx="33.5" cy="7.1" rx="1.8" ry="0.8" opacity="1" transform="rotate(-18 33.5 7.1)"/><ellipse cx="37.6" cy="7.1" rx="2.0" ry="1.2" opacity="0.85" transform="rotate(10 37.6 7.1)"/><ellipse cx="42.3" cy="8.2" rx="1.6" ry="1.2" opacity="0.7" transform="rotate(-7 42.3 8.2)"/><ellipse cx="45.7" cy="7.3" rx="2.0" ry="1.2" opacity="0.7" transform="rotate(-7 45.7 7.3)"/><ellipse cx="48.9" cy="7.9" rx="1.4" ry="1.0" opacity="1" transform="rotate(-4 48.9 7.9)"/><ellipse cx="53.2" cy="7.4" rx="2.2" ry="0.8" opacity="1" transform="rotate(29 53.2 7.4)"/><ellipse cx="57.1" cy="7.3" rx="1.4" ry="1.1" opacity="1" transform="rotate(-16 57.1 7.3)"/><ellipse cx="62.7" cy="7.8" rx="2.2" ry="1.0" opacity="0.7" transform="rotate(3 62.7 7.8)"/><ellipse cx="65.8" cy="7.1" rx="2.0" ry="1.0" opacity="1" transform="rotate(-30 65.8 7.1)"/><ellipse cx="3.5" cy="10.0" rx="2.1" ry="0.8" opacity="0.7" transform="rotate(25 3.5 10.0)"/><ellipse cx="7.4" cy="10.4" rx="2.1" ry="1.0" opacity="1" transform="rotate(-32 7.4 10.4)"/><ellipse cx="11.9" cy="10.2" rx="1.5" ry="1.2" opacity="1" transform="rotate(9 11.9 10.2)"/><ellipse cx="15.0" cy="10.1" rx="1.7" ry="0.8" opacity="1" transform="rotate(-17 15.0 10.1)"/><ellipse cx="18.7" cy="11.1" rx="1.8" ry="0.9" opacity="0.7" transform="rotate(-4 18.7 11.1)"/><ellipse cx="23.0" cy="11.0" rx="2.2" ry="0.9" opacity="1" transform="rotate(-20 23.0 11.0)"/><ellipse cx="27.4" cy="10.7" rx="1.9" ry="1.0" opacity="1" transform="rotate(-11 27.4 10.7)"/><ellipse cx="30.5" cy="10.7" rx="2.1" ry="1.0" opacity="0.7" transform="rotate(-31 30.5 10.7)"/><ellipse cx="36.0" cy="10.2" rx="1.6" ry="0.9" opacity="1" transform="rotate(-3 36.0 10.2)"/><ellipse cx="38.8" cy="10.3" rx="1.7" ry="1.2" opacity="1" transform="rotate(-12 38.8 10.3)"/><ellipse cx="43.9" cy="10.3" rx="1.4" ry="1.0" opacity="1" transform="rotate(-2 43.9 10.3)"/><ellipse cx="48.5" cy="10.0" rx="2.1" ry="0.9" opacity="0.7" transform="rotate(6 48.5 10.0)"/><ellipse cx="51.4" cy="10.2" rx="1.9" ry="1.0" opacity="0.7" transform="rotate(18 51.4 10.2)"/><ellipse cx="56.4" cy="10.5" rx="1.6" ry="1.0" opacity="0.7" transform="rotate(-25 56.4 10.5)"/><ellipse cx="60.9" cy="10.1" rx="1.8" ry="1.0" opacity="1" transform="rotate(23 60.9 10.1)"/><ellipse cx="64.9" cy="11.0" rx="1.9" ry="1.1" opacity="1" transform="rotate(-19 64.9 11.0)"/><ellipse cx="1.2" cy="14.0" rx="1.7" ry="1.0" opacity="1" transform="rotate(-31 1.2 14.0)"/><ellipse cx="5.5" cy="13.4" rx="1.4" ry="1.1" opacity="1" transform="rotate(17 5.5 13.4)"/><ellipse cx="8.8" cy="13.7" rx="1.6" ry="0.8" opacity="1" transform="rotate(-16 8.8 13.7)"/><ellipse cx="13.6" cy="13.4" rx="2.1" ry="0.8" opacity="0.85" transform="rotate(29 13.6 13.4)"/><ellipse cx="17.9" cy="13.6" rx="1.5" ry="0.9" opacity="0.85" transform="rotate(-17 17.9 13.6)"/><ellipse cx="21.3" cy="13.4" rx="1.8" ry="1.2" opacity="1" transform="rotate(-28 21.3 13.4)"/><ellipse cx="25.8" cy="13.4" rx="1.8" ry="1.0" opacity="1" transform="rotate(-27 25.8 13.4)"/><ellipse cx="29.4" cy="13.4" rx="1.6" ry="0.8" opacity="0.7" transform="rotate(0 29.4 13.4)"/><ellipse cx="34.5" cy="13.9" rx="2.1" ry="0.8" opacity="0.85" transform="rotate(-29 34.5 13.9)"/><ellipse cx="38.7" cy="13.8" rx="1.8" ry="1.2" opacity="1" transform="rotate(14 38.7 13.8)"/><ellipse cx="43.9" cy="13.3" rx="1.5" ry="1.2" opacity="0.7" transform="rotate(13 43.9 13.3)"/><ellipse cx="46.7" cy="13.2" rx="1.7" ry="1.1" opacity="0.85" transform="rotate(-35 46.7 13.2)"/><ellipse cx="51.1" cy="13.9" rx="2.0" ry="1.2" opacity="0.85" transform="rotate(-15 51.1 13.9)"/><ellipse cx="55.2" cy="13.8" rx="1.5" ry="1.2" opacity="1" transform="rotate(18 55.2 13.8)"/><ellipse cx="58.5" cy="13.6" rx="1.9" ry="0.9" opacity="0.7" transform="rotate(33 58.5 13.6)"/><ellipse cx="62.8" cy="13.2" rx="2.2" ry="1.2" opacity="0.7" transform="rotate(22 62.8 13.2)"/><ellipse cx="68.6" cy="13.5" rx="2.0" ry="0.8" opacity="0.7" transform="rotate(16 68.6 13.5)"/><ellipse cx="2.4" cy="16.7" rx="1.8" ry="1.2" opacity="1" transform="rotate(4 2.4 16.7)"/><ellipse cx="6.8" cy="16.1" rx="2.0" ry="1.2" opacity="1" transform="rotate(-17 6.8 16.1)"/><ellipse cx="11.1" cy="16.2" rx="1.5" ry="0.9" opacity="0.7" transform="rotate(-20 11.1 16.2)"/><ellipse cx="15.0" cy="16.1" rx="2.0" ry="1.0" opacity="1" transform="rotate(3 15.0 16.1)"/><ellipse cx="18.6" cy="15.8" rx="1.6" ry="0.9" opacity="1" transform="rotate(5 18.6 15.8)"/><ellipse cx="23.0" cy="16.2" rx="1.8" ry="1.0" opacity="1" transform="rotate(-11 23.0 16.2)"/><ellipse cx="27.4" cy="16.1" rx="1.9" ry="1.0" opacity="1" transform="rotate(20 27.4 16.1)"/><ellipse cx="31.6" cy="16.2" rx="1.9" ry="1.0" opacity="1" transform="rotate(-13 31.6 16.2)"/><ellipse cx="34.6" cy="16.6" rx="2.0" ry="1.2" opacity="1" transform="rotate(-1 34.6 16.6)"/><ellipse cx="39.4" cy="16.7" rx="2.1" ry="1.2" opacity="1" transform="rotate(-18 39.4 16.7)"/><ellipse cx="41.9" cy="16.9" rx="1.5" ry="1.1" opacity="0.7" transform="rotate(14 41.9 16.9)"/><ellipse cx="46.6" cy="15.7" rx="1.5" ry="1.0" opacity="0.85" transform="rotate(-32 46.6 15.7)"/><ellipse cx="50.9" cy="16.3" rx="1.7" ry="1.1" opacity="0.85" transform="rotate(-28 50.9 16.3)"/><ellipse cx="55.0" cy="16.2" rx="1.6" ry="1.0" opacity="0.85" transform="rotate(-34 55.0 16.2)"/><ellipse cx="59.1" cy="16.1" rx="2.1" ry="0.9" opacity="1" transform="rotate(2 59.1 16.1)"/><ellipse cx="63.0" cy="16.5" rx="1.4" ry="0.9" opacity="0.7" transform="rotate(27 63.0 16.5)"/><ellipse cx="66.3" cy="16.2" rx="1.7" ry="1.0" opacity="0.7" transform="rotate(14 66.3 16.2)"/></g>
<clipPath id="gclip"><rect x="0" y="0" width="68" height="17"/></clipPath>
<g id="pp">
<rect x="1.5" y="1.5" width="76" height="75" rx="12" fill="#fff" stroke="#000" stroke-width="3"/>
<path d="M22,20 L25,7.5 h29 L57,20" fill="#fff" stroke="#000" stroke-width="2.4" stroke-linejoin="round"/>
<rect x="15.5" y="20.5" width="48" height="18" rx="2" fill="#6890d8" stroke="#02060f" stroke-width="2.6"/>
<circle cx="23.5" cy="29.5" r="3.5" fill="#fff" stroke="#06102a" stroke-width="2.4"/>
<circle cx="54.5" cy="29.5" r="3.5" fill="#fff" stroke="#06102a" stroke-width="2.4"/>
<path d="M30,25.5 h19 M30,29.5 h19 M30,33.5 h19" stroke="#06102a" stroke-width="1.9"/>
<rect x="19.5" y="39" width="6.5" height="7.5" fill="#000"/><rect x="53" y="39" width="6.5" height="7.5" fill="#000"/>
<path d="M5,48.5 h69" stroke="#222" stroke-width="1.4" stroke-dasharray="1.3,0.9"/>
<g transform="translate(5.5,50)" fill="#111" clip-path="url(#gclip)"><use href="#gravel"/></g>
<circle cx="67.5" cy="67" r="5" fill="#117a11"/>
</g>
<g id="orf">
<circle r="18" fill="#fff" stroke="#000" stroke-width="3"/>
<rect x="-14.5" y="-9.5" width="29" height="19.5" fill="#6096e4"/>
<path d="M-14.5,-8.5 h29 M-14.5,9 h29" stroke="#1c2a4a" stroke-width="2"/>
<path d="M-1,-13.5 v6 M-1,7.5 v6" stroke="#7f858f" stroke-width="3"/>
<path d="M-14,-4 C-6,-4 -2,5 5,5 L11,5 M-14,4 C-6,4 -2,-5 5,-5 L11,-5" fill="none" stroke="#e6efff" stroke-width="1.6"/>
<path d="M8,-8 l5,3 l-5,3 M8,2 l5,3 l-5,3" fill="none" stroke="#fff" stroke-width="1.3"/>
</g>
<g id="swale">
<circle r="18" fill="#fff" stroke="#000" stroke-width="3"/>
<path d="M-9,-2 L0,1.5 L9,-2" fill="none" stroke="#2a8a3a" stroke-width="1.8"/>
</g>
<g id="mh">
<circle r="18" fill="#fff" stroke="#000" stroke-width="3"/>
<circle r="9.5" fill="none" stroke="#222" stroke-width="1.6"/>
</g>
<g id="dot"><circle r="4.8" fill="#117a11"/></g>
</defs>
<clipPath id="mapclip"><rect x="565" y="133" width="642" height="580"/></clipPath>
<g clip-path="url(#mapclip)">
<polygon points="587,133 667,133 667,207 637,207 637,425 644,425 644,452.4 620,465 613,442 608,425 602,385 600,338 595,270 591,206 587,206" fill="url(#grid)" stroke="none" stroke-width="1"/>
<rect x="650" y="133" width="14" height="74" fill="#fff" stroke="none" stroke-width="1"/>
<rect x="594.5" y="139" width="69.5" height="31" fill="#fff" stroke="#2a2a2a" stroke-width="1.4"/>
<polyline points="594.5,155 650,155" fill="none" stroke="#444" stroke-width="1.3" />
<polyline points="650,133 650,170" fill="none" stroke="#2a2a2a" stroke-width="1.3" />
<polyline points="665.5,133 665.5,207" fill="none" stroke="#2c4a10" stroke-width="2.6" />
<polygon points="604.7,133.6 635.4,133.6 635.4,139 604.7,139" fill="url(#dots)" stroke="none" stroke-width="1"/>
<polyline points="604.7,139 635.4,139 635.4,133" fill="none" stroke="#333" stroke-width="1" />
<polygon points="601,175 620,175 626,178 631,178 631,203 610,203 606,190" fill="url(#dots)" stroke="none" stroke-width="1"/>
<polygon points="636,178 660,178 660,200 652,200 652,206 636,206" fill="url(#dots)" stroke="none" stroke-width="1"/>
<polygon points="593,212 627,212 627,253 595,253" fill="url(#dots)" stroke="none" stroke-width="1"/>
<polygon points="595,258 627,258 627,291 600,291 596,280" fill="url(#dots)" stroke="none" stroke-width="1"/>
<polygon points="598,301 627,301 627,338 600,338" fill="url(#dots)" stroke="none" stroke-width="1"/>
<polygon points="600,339 627,339 627,376 612,376 612,372 602,372" fill="url(#dots)" stroke="none" stroke-width="1"/>
<polygon points="608.5,396 627,396 627,423 611,423" fill="url(#dots)" stroke="none" stroke-width="1"/>
<polygon points="614,436 630,436 630,457 620,462" fill="url(#dots)" stroke="none" stroke-width="1"/>
<polyline points="591,207 632,207 634,210 637,212 637,207 667,207" fill="none" stroke="#2a2a2a" stroke-width="1.4" />
<polyline points="592,253 637,253" fill="none" stroke="#222" stroke-width="1.6" />
<polyline points="594,296 637,296" fill="none" stroke="#334" stroke-width="1.6" />
<polyline points="600,338.5 627,338.5" fill="none" stroke="#222" stroke-width="1.4" />
<polyline points="596,382 668,382" fill="none" stroke="#999" stroke-width="1.2" />
<polyline points="600,385 637,385" fill="none" stroke="#222" stroke-width="1.2" />
<polyline points="637,207 637,425" fill="none" stroke="#2a2a2a" stroke-width="1.5" />
<rect x="637.7" y="226" width="31" height="54.6" fill="#fff" stroke="none" stroke-width="1"/>
<rect x="637.7" y="310" width="31" height="56" fill="#fff" stroke="none" stroke-width="1"/>
<rect x="637.7" y="396" width="31" height="29" fill="#fff" stroke="none" stroke-width="1"/>
<rect x="644" y="425" width="25" height="42" fill="#fff" stroke="none" stroke-width="1"/>
<rect x="642.7" y="212.8" width="48" height="11.5" fill="url(#brown)" stroke="none" stroke-width="1"/>
<polyline points="676,212.8 676,224.3" fill="none" stroke="#c9b68a" stroke-width="0.8" />
<rect x="642.7" y="280.6" width="26" height="12.7" fill="url(#brown)" stroke="none" stroke-width="1"/>
<rect x="642.7" y="298" width="26" height="12" fill="url(#brown)" stroke="none" stroke-width="1"/>
<rect x="642.7" y="366" width="26" height="13" fill="url(#brown)" stroke="none" stroke-width="1"/>
<rect x="642.7" y="384.4" width="26" height="11.3" fill="url(#brown)" stroke="none" stroke-width="1"/>
<rect x="642.7" y="293.3" width="26" height="5" fill="#fff" stroke="none" stroke-width="1"/>
<polyline points="642.7,295.8 668,295.8" fill="none" stroke="#333" stroke-width="2.2" stroke-dasharray="1,1.2"/>
<rect x="642.7" y="379" width="26" height="5" fill="#fff" stroke="none" stroke-width="1"/>
<polyline points="642.7,381.5 668,381.5" fill="none" stroke="#333" stroke-width="2.2" stroke-dasharray="1,1.2"/>
<polyline points="640,280 640,310" fill="none" stroke="#333" stroke-width="2" stroke-dasharray="1,1.5"/>
<polyline points="640,366 640,396" fill="none" stroke="#333" stroke-width="2" stroke-dasharray="1,1.5"/>
<polyline points="583.5,133 584,250 584.5,346 601.7,415 617.7,484" fill="none" stroke="#5cc070" stroke-width="1.6" />
<polyline points="614,467.6 661,467.6" fill="none" stroke="#999" stroke-width="1.2" />
<polyline points="624,476 646.6,462" fill="none" stroke="#bbb" stroke-width="1" />
<polyline points="647.5,467 647.5,478 652,478" fill="none" stroke="#bbb" stroke-width="1" />
<polyline points="607.3,385.3 637.7,385.3 637.7,424.6 613,424.6 608,405 607.3,385.3" fill="none" stroke="#2a2a2a" stroke-width="1.4" />
<polyline points="602,386 607,420 611,425" fill="none" stroke="#2a2a2a" stroke-width="1.2" />
<polyline points="637.7,425 644,425 644,452.4 620,465" fill="none" stroke="#2a2a2a" stroke-width="1.4" />
<path d="M644,452.4 C647,458 652,464 658.5,467.6" fill="none" stroke="#333" stroke-width="1"/>
<polyline points="748.3,133 748.3,310" fill="none" stroke="#2a2a2a" stroke-width="1.4" />
<polyline points="750,150 750,310" fill="none" stroke="#555" stroke-width="2.4" stroke-dasharray="1,1.2"/>
<polygon points="750,146 791.6,146 791.6,179.4 750,179.4" fill="url(#grid)" stroke="none" stroke-width="1"/>
<polygon points="758.7,155 791.6,155 791.6,179.4 763.5,179.4 763.5,166 758.7,166" fill="url(#dots)" stroke="none" stroke-width="1"/>
<polyline points="750,146 791.6,146 791.6,179.4 750,179.4" fill="none" stroke="#2a2a2a" stroke-width="1.2" />
<polyline points="791.6,163 833.7,163" fill="none" stroke="#444" stroke-width="1.2" />
<polyline points="820,133 820,163" fill="none" stroke="#2a2a2a" stroke-width="1.2" />
<polyline points="824,133 824,158.5 837,158.5" fill="none" stroke="#aaa" stroke-width="1" />
<polyline points="837,163 837,168" fill="none" stroke="#222" stroke-width="1.3" />
<polygon points="791.6,171.5 825,171.5 826.5,196 791.6,180" fill="url(#dots)" stroke="none" stroke-width="1"/>
<polyline points="791.6,180 832.7,200.7" fill="none" stroke="#2a2a2a" stroke-width="1.3" />
<polyline points="791.6,183 830,203" fill="none" stroke="#aaa" stroke-width="1" />
<polyline points="751,185.6 785.8,185.6 787,190 795,187" fill="none" stroke="#2a2a2a" stroke-width="1.2" />
<polyline points="781.7,185.6 781.7,229" fill="none" stroke="#2a2a2a" stroke-width="1.2" />
<polyline points="791,192 791,229" fill="none" stroke="#aaa" stroke-width="1" />
<polyline points="751,229 769,229 770,228 794,228 794,310" fill="none" stroke="#2a2a2a" stroke-width="1.2" />
<polyline points="751,258.5 821,259.5" fill="none" stroke="#2a2a2a" stroke-width="1.1" />
<polyline points="751,283 803,283" fill="none" stroke="#2a2a2a" stroke-width="1.1" />
<polygon points="827.5,200.7 957,198 967.7,194.6 1001,180 1018,171 1030,233 1005,240 1000,230 958,256 915.6,256 915.6,235.7 870.5,235.7 870.5,254 840,254 840,310 821,310" fill="url(#dots)" stroke="none" stroke-width="1"/>
<polyline points="827.5,200.7 957,198 967.7,194.6 1001,180" fill="none" stroke="#555" stroke-width="1" />
<polyline points="827.5,200.7 821,310" fill="none" stroke="#666" stroke-width="1.2" />
<polyline points="840,254 870.5,254 870.5,235.7 915.6,235.7 915.6,308" fill="none" stroke="#2a2a2a" stroke-width="1.3" />
<polyline points="840,254 840,310" fill="none" stroke="#2a2a2a" stroke-width="1.3" />
<polyline points="967,194.6 1049,156" fill="none" stroke="#2a2a2a" stroke-width="1.1" />
<polygon points="915,216.5 956,216.5 956,254.5 915,254.5" fill="#fff" stroke="none" stroke-width="1"/>
<polyline points="915,216.5 915,254" fill="none" stroke="#2a2a2a" stroke-width="1.2" />
<polyline points="919,217 929,217 929,222 933,222 933,228 929,228 929,233 925,233 925,240 922,240 922,250" fill="none" stroke="#2a2a2a" stroke-width="1" />
<polyline points="933,219.5 956,219.5" fill="none" stroke="#2a2a2a" stroke-width="1" />
<polyline points="933,222 933,235.5 956,235.5" fill="none" stroke="#2a2a2a" stroke-width="1" />
<polyline points="950,235.5 950,238" fill="none" stroke="#2a2a2a" stroke-width="1" />
<circle cx="942" cy="228" r="0.8" fill="#222"/>
<path d="M916,208 C925,200 935,203 942,207 C948,204 955,205 956,212" fill="none" stroke="#3a7a3a" stroke-width="1"/>
<rect x="936" y="239.8" width="24" height="13.4" fill="url(#brown)" stroke="none" stroke-width="1"/>
<polyline points="948,240 948,253" fill="none" stroke="#d9c9a0" stroke-width="1" />
<polygon points="968,209 1003,209 1007,236 1009,244 1009,310 978,310 978,253 968,253" fill="#fff" stroke="none" stroke-width="1"/>
<polyline points="968,209 1003,209 1009,244" fill="none" stroke="#2a2a2a" stroke-width="1.2" />
<polyline points="965,210 965,253" fill="none" stroke="#555" stroke-width="2" />
<rect x="963.5" y="211" width="3.5" height="10" fill="#aaa" stroke="none" stroke-width="1"/>
<polygon points="979,197.5 991,197.5 991,205 1003,205 1005,209 968,209 968,205 979,205" fill="url(#grid)" stroke="none" stroke-width="1"/>
<polygon points="1005,209 1020,236 1026,240 1027.6,281 1027.6,330 1017,330 1017,281 1009,281 1009,244" fill="url(#grid)" stroke="none" stroke-width="1"/>
<rect x="748" y="311" width="154" height="81" fill="#fff" stroke="none" stroke-width="1"/>
<polyline points="748,312.8 902,312.8" fill="none" stroke="#999" stroke-width="2.2" />
<polyline points="756,314 756,391" fill="none" stroke="#d0d0d0" stroke-width="1" />
<polyline points="764,314 764,391" fill="none" stroke="#d0d0d0" stroke-width="1" />
<polyline points="772,314 772,391" fill="none" stroke="#d0d0d0" stroke-width="1" />
<polyline points="780,314 780,391" fill="none" stroke="#d0d0d0" stroke-width="1" />
<polyline points="788,314 788,391" fill="none" stroke="#d0d0d0" stroke-width="1" />
<polyline points="796,314 796,391" fill="none" stroke="#d0d0d0" stroke-width="1" />
<polyline points="804,314 804,391" fill="none" stroke="#d0d0d0" stroke-width="1" />
<polyline points="812,314 812,391" fill="none" stroke="#d0d0d0" stroke-width="1" />
<polyline points="820,314 820,391" fill="none" stroke="#d0d0d0" stroke-width="1" />
<polyline points="828,314 828,391" fill="none" stroke="#d0d0d0" stroke-width="1" />
<polyline points="836,314 836,391" fill="none" stroke="#d0d0d0" stroke-width="1" />
<polyline points="844,314 844,391" fill="none" stroke="#d0d0d0" stroke-width="1" />
<polyline points="852,314 852,391" fill="none" stroke="#d0d0d0" stroke-width="1" />
<polyline points="860,314 860,391" fill="none" stroke="#d0d0d0" stroke-width="1" />
<polyline points="868,314 868,391" fill="none" stroke="#d0d0d0" stroke-width="1" />
<polyline points="876,314 876,391" fill="none" stroke="#d0d0d0" stroke-width="1" />
<polyline points="884,314 884,391" fill="none" stroke="#d0d0d0" stroke-width="1" />
<polyline points="892,314 892,391" fill="none" stroke="#d0d0d0" stroke-width="1" />
<polyline points="900,314 900,391" fill="none" stroke="#d0d0d0" stroke-width="1" />
<rect x="748.5" y="337.7" width="45.5" height="29.3" fill="#d5d5d5" stroke="none" stroke-width="1"/>
<polygon points="748,391.5 902,391.5 902,398 748,398" fill="url(#grid)" stroke="none" stroke-width="1"/>
<polyline points="748,391.5 902,391.5" fill="none" stroke="#556" stroke-width="1" />
<polyline points="748,398 816,398" fill="none" stroke="#2a2a2a" stroke-width="1" />
<rect x="748" y="398" width="68" height="62.6" fill="#fff" stroke="none" stroke-width="1"/>
<polygon points="685,460.6 783.3,460.6 783.3,452 815,452 815,398 825,398 825,470 685,470" fill="url(#grid)" stroke="none" stroke-width="1"/>
<polyline points="685,470 825,470" fill="none" stroke="#444" stroke-width="1.2" />
<polyline points="783.3,460.6 783.3,452 815,452 815,398" fill="none" stroke="#2a2a2a" stroke-width="1.3" />
<polyline points="748,460.6 783.3,460.6" fill="none" stroke="#2a2a2a" stroke-width="1" />
<polygon points="816,398 902,398 902,600 818,600 818,470 800,470 800,451 816,451" fill="url(#grid)" stroke="none" stroke-width="1"/>
<polygon points="814,398 861,398 861,422.5 814,422.5" fill="url(#grid)" stroke="none" stroke-width="1"/>
<rect x="822" y="396" width="38" height="26" fill="#fff" stroke="#2a2a2a" stroke-width="1.2"/>
<polygon points="829,397 852,397 852,422 829,422" fill="url(#dots)" stroke="none" stroke-width="1"/>
<rect x="860.4" y="396" width="42" height="30" fill="#fff" stroke="none" stroke-width="1"/>
<polyline points="860.4,396 860.4,476" fill="none" stroke="#2a2a2a" stroke-width="1.2" />
<polyline points="822,422 902,422" fill="none" stroke="#2a2a2a" stroke-width="1.2" />
<polyline points="822,450 902,450" fill="none" stroke="#2a2a2a" stroke-width="1.2" />
<polyline points="816,466 902,464" fill="none" stroke="#aaa" stroke-width="1" />
<rect x="861" y="422" width="41" height="54" fill="#fff" stroke="none" stroke-width="1"/>
<polyline points="861,450 902,450" fill="none" stroke="#2a2a2a" stroke-width="1.2" />
<polygon points="829,425.6 857,425.6 857,473 829,473" fill="url(#dots)" stroke="none" stroke-width="1"/>
<polygon points="820,475.7 902,475.7 902,520 820,520" fill="#fff" stroke="none" stroke-width="1"/>
<polygon points="831,478 862,478 862,512 835,512" fill="url(#dots)" stroke="none" stroke-width="1"/>
<polyline points="820,475.7 902,475.7" fill="none" stroke="#2a2a2a" stroke-width="1.2" />
<polyline points="871,478 871,520" fill="none" stroke="#2a2a2a" stroke-width="1" />
<polyline points="817,504 860,520 866,520 866,516 869,516 869,520 902,520" fill="none" stroke="#2a2a2a" stroke-width="1.3" />
<polyline points="819,508 858,524 900,524" fill="none" stroke="#999" stroke-width="1" />
<polygon points="818,506 863,522 863,543 818,543" fill="url(#grid)" stroke="none" stroke-width="1"/>
<polygon points="830,512 862,524 862,540 832,540" fill="url(#dots)" stroke="none" stroke-width="1"/>
<polygon points="863,525 900,525 900,555 863,555" fill="url(#dots)" stroke="none" stroke-width="1"/>
<polyline points="863,525 863,556 900,556" fill="none" stroke="#888" stroke-width="1" />
<rect x="833.7" y="543" width="72" height="49" fill="#fff" stroke="none" stroke-width="1"/>
<polyline points="833.7,543 833.7,592 906,592" fill="none" stroke="#2a2a2a" stroke-width="1.4" />
<polyline points="833.7,543 863,543" fill="none" stroke="#2a2a2a" stroke-width="1.2" />
<rect x="818" y="543" width="14.7" height="53" fill="url(#brownh)" stroke="none" stroke-width="1"/>
<polygon points="818,592 906,592 906,598 818,598" fill="url(#grid)" stroke="none" stroke-width="1"/>
<polyline points="836,588 845,588 845,592" fill="none" stroke="#2a2a2a" stroke-width="1" />
<polyline points="845,598 906,596" fill="none" stroke="#3a6a3a" stroke-width="1.5" stroke-dasharray="2,1"/>
<polygon points="902,472 909,472 909,590 902,590" fill="url(#grid)" stroke="none" stroke-width="1"/>
<polygon points="903,540 909,540 909,600 903,600" fill="url(#dots)" stroke="none" stroke-width="1"/>
<polygon points="982,500 992,500 992,585 982,585" fill="url(#grid)" stroke="none" stroke-width="1"/>
<polygon points="960,555 992,555 992,585 965,590" fill="url(#dots)" stroke="none" stroke-width="1"/>
<polyline points="990.6,500 990.6,560" fill="none" stroke="#222" stroke-width="2" />
<rect x="978" y="245" width="31" height="63" fill="#fff" stroke="none" stroke-width="1"/>
<polyline points="978,253 978,308" fill="none" stroke="#2a2a2a" stroke-width="1.2" />
<rect x="979" y="308.6" width="38" height="16" fill="url(#brown)" stroke="none" stroke-width="1"/>
<rect x="979" y="324.6" width="38" height="4.4" fill="#fff" stroke="none" stroke-width="1"/>
<polyline points="979,326.8 1017,326.8" fill="none" stroke="#333" stroke-width="2.2" stroke-dasharray="1,1.2"/>
<rect x="979" y="329" width="38" height="10" fill="url(#brown)" stroke="none" stroke-width="1"/>
<polyline points="991,309 996,325" fill="none" stroke="#222" stroke-width="1" />
<rect x="978" y="341" width="31" height="54" fill="#fff" stroke="none" stroke-width="1"/>
<polyline points="978,341 1009,341" fill="none" stroke="#2a2a2a" stroke-width="1.2" />
<rect x="978" y="395.4" width="32" height="25" fill="url(#brown)" stroke="none" stroke-width="1"/>
<rect x="985" y="422" width="24" height="54" fill="#fff" stroke="none" stroke-width="1"/>
<polyline points="985,422 1009,422" fill="none" stroke="#2a2a2a" stroke-width="1.2" />
<rect x="980" y="475.7" width="30" height="14.3" fill="url(#brown)" stroke="none" stroke-width="1"/>
<polygon points="990,498 1010,498 1010,535 990,535" fill="url(#grid)" stroke="none" stroke-width="1"/>
<polygon points="993,505 1010,505 1010,530 993,530" fill="url(#dots)" stroke="none" stroke-width="1"/>
<rect x="985" y="535" width="25" height="45" fill="#fff" stroke="none" stroke-width="1"/>
<polyline points="985,535 1010,535" fill="none" stroke="#2a2a2a" stroke-width="1.2" />
<polygon points="1003,205 1018,171 1029,204 1043,247 1050,273 1061,322 1069,391 1071.7,459 1072.7,535 1009,535 1009,279 1011,251" fill="url(#grid)" stroke="none" stroke-width="1"/>
<rect x="1005" y="535" width="62" height="31" fill="#fff" stroke="none" stroke-width="1"/>
<polyline points="1005,535 1067,535" fill="none" stroke="#2a2a2a" stroke-width="1.2" />
<polyline points="1005,566 1067,566" fill="none" stroke="#2a2a2a" stroke-width="1" />
<polyline points="1020,535 1020,566" fill="none" stroke="#2a2a2a" stroke-width="1" />
<polygon points="1004,200 1018,171 1029,204 1040,250 1033,264 1012,250" fill="url(#dots)" stroke="none" stroke-width="1"/>
<polygon points="1027,326 1062,326 1066,380 1050,405 1030,405" fill="url(#dots)" stroke="none" stroke-width="1"/>
<polygon points="1024,412 1068,412 1070,440 1028,440" fill="url(#dots)" stroke="none" stroke-width="1"/>
<polygon points="1026,445 1055,445 1058,476 1030,476" fill="url(#dots)" stroke="none" stroke-width="1"/>
<polygon points="1012,500 1060,500 1062,533 1015,533" fill="url(#dots)" stroke="none" stroke-width="1"/>
<polyline points="1009,244 1009,580" fill="none" stroke="#2a2a2a" stroke-width="1.3" />
<polyline points="1009,476 1068,476" fill="none" stroke="#2a2a2a" stroke-width="1" />
<polyline points="1009,535 1068,535" fill="none" stroke="#2a2a2a" stroke-width="1.1" />
<polygon points="1019.5,566 1062.5,566 1062.5,579 1019.5,580" fill="url(#grid)" stroke="none" stroke-width="1"/>
<polyline points="1005,562 1005,575 1035,575" fill="none" stroke="#2a2a2a" stroke-width="1" />
<polyline points="1000,578 1062,570" fill="none" stroke="#2a2a2a" stroke-width="1.2" />
<polyline points="1046,133 1049,156 1059,200 1085,281 1111.7,375.6 1115,420 1113.6,494 1124.9,561.5" fill="none" stroke="#2a2a2a" stroke-width="1.2" />
<polyline points="1022,133 1030,190" fill="none" stroke="#aaa" stroke-width="1" />
<polyline points="1053,230 1066,223.5" fill="none" stroke="#2a2a2a" stroke-width="1" />
<polyline points="1058,285.6 1085,280" fill="none" stroke="#2a2a2a" stroke-width="1" />
<polyline points="1009,324 1042,324" fill="none" stroke="#2a2a2a" stroke-width="1.2" />
<polyline points="1070,356 1101,340" fill="none" stroke="#2a2a2a" stroke-width="1" />
<polyline points="1069.6,425.6 1113,425.6" fill="none" stroke="#2a2a2a" stroke-width="1" />
<polyline points="1072.3,494 1114,494" fill="none" stroke="#2a2a2a" stroke-width="1" />
<polyline points="1072.7,580 1124.9,561.5" fill="none" stroke="#2a2a2a" stroke-width="1" />
<path d="M1168.8,440 C1185,455 1190,480 1184,500 C1175,530 1150,550 1126,561.5 C1110,570 1090,577 1072.7,581" fill="none" stroke="#bbb" stroke-width="1.2"/>
<path d="M1205,576 C1170,578 1130,585 1103,596 C1090,603 1080,615 1077,640" fill="none" stroke="#bbb" stroke-width="1.2"/>
<path d="M1077,592 C1060,596 1020,598 990,600" fill="none" stroke="#bbb" stroke-width="1.2"/>
<path d="M900,568 C902,590 912,600 930,600 M966,578 C972,592 985,600 1000,600" fill="none" stroke="#bbb" stroke-width="1.2"/>
<polyline points="801,612 893,607" fill="none" stroke="#aaa" stroke-width="1.2" />
<polyline points="802,640 880,635 965,634" fill="none" stroke="#aaa" stroke-width="1.2" />
<polyline points="893,600 893,640" fill="none" stroke="#bbb" stroke-width="1" />
<polyline points="905,605 905,640" fill="none" stroke="#bbb" stroke-width="1" />
<polyline points="898,610 902,630" fill="none" stroke="#ccc" stroke-width="1" />
<polyline points="965,600 965,634" fill="none" stroke="#bbb" stroke-width="1" />
<polyline points="969,600 969,634" fill="none" stroke="#ccc" stroke-width="1" />
<path d="M918.9,656.6 C925,645 935,636 946.6,634.4 C960,630 990,628 1013,634.4 C1030,645 1035,670 1031.7,682.5 C1028,695 1015,705 994.7,708.4 C975,710 955,707 930,701 C920,697 915,690 917,680 Z" fill="#f8ddb5" stroke="#b03a2e" stroke-width="2.2" stroke-dasharray="5,3"/>
<use href="#pp" x="668.5" y="113"/>
<text x="709" y="205" font-size="12.5" font-weight="bold" fill="#111" text-anchor="middle">Porous Paving 1</text>
<use href="#pp" x="668.5" y="220.5"/>
<text x="709" y="313" font-size="12.5" font-weight="bold" fill="#111" text-anchor="middle">Porous Paving 2</text>
<use href="#pp" x="669.5" y="383.5"/>
<use href="#pp" x="669.5" y="316.3"/>
<text x="709" y="408.3" font-size="12.5" font-weight="bold" fill="#111" text-anchor="middle">Porous Paving 3</text>
<text x="709" y="475" font-size="12.5" font-weight="bold" fill="#111" text-anchor="middle">Porous Paving 4</text>
<use href="#pp" x="793.5" y="311"/>
<text x="833" y="403" font-size="12.5" font-weight="bold" fill="#111" text-anchor="middle">Porous Paving 5</text>
<text x="771" y="386" font-size="12.5" font-weight="bold" fill="#111" text-anchor="middle">Orifice</text>
<text x="892" y="386" font-size="12.5" font-weight="bold" fill="#111" text-anchor="middle">Orifice</text>
<use href="#pp" x="900.5" y="254.5"/>
<text x="940.5" y="347" font-size="12.5" font-weight="bold" fill="#111" text-anchor="middle">Porous Paving 6</text>
<use href="#pp" x="897" y="317"/>
<text x="936" y="408" font-size="12.5" font-weight="bold" fill="#111" text-anchor="middle">Porous Paving 7</text>
<use href="#pp" x="900" y="394.6"/>
<text x="939.5" y="486.3" font-size="12.5" font-weight="bold" fill="#111" text-anchor="middle">Porous Paving 8</text>
<use href="#pp" x="906.5" y="486"/>
<text x="945.5" y="576.5" font-size="12.5" font-weight="bold" fill="#111" text-anchor="middle">Porous Paving 9</text>
<text x="1030" y="237" font-size="12.5" font-weight="bold" fill="#111" text-anchor="middle">Swale 1</text>
<text x="1030" y="250.5" font-size="12.5" font-weight="bold" fill="#111" text-anchor="middle">\_/ 150x300mm 1:3.0</text>
<text x="1044" y="281" font-size="12.5" font-weight="bold" fill="#111" text-anchor="middle">Swale 2</text>
<text x="1044" y="295.5" font-size="12.5" font-weight="bold" fill="#111" text-anchor="middle">\_/ 150x300mm 1:3.0</text>
<text x="1050" y="306" font-size="12.5" font-weight="bold" fill="#111" text-anchor="middle">Swale 3</text>
<text x="1050" y="320.5" font-size="12.5" font-weight="bold" fill="#111" text-anchor="middle">\_/ 150x300mm 1:3.0</text>
<text x="1061" y="355" font-size="12.5" font-weight="bold" fill="#111" text-anchor="middle">Swale 4</text>
<text x="1061" y="369.5" font-size="12.5" font-weight="bold" fill="#111" text-anchor="middle">\_/ 150x300mm 1:3.0</text>
<text x="1070" y="424.5" font-size="12.5" font-weight="bold" fill="#111" text-anchor="middle">Swale 5</text>
<text x="1069.5" y="438" font-size="12.5" font-weight="bold" fill="#111" text-anchor="middle">\_/ 150x300mm 1:3.0</text>
<text x="1072" y="492" font-size="12.5" font-weight="bold" fill="#111" text-anchor="middle">Swale 6</text>
<text x="1071" y="507.4" font-size="12.5" font-weight="bold" fill="#111" text-anchor="middle">\_/ 150x300mm 1:3.0</text>
<text x="1073" y="563.6" font-size="12.5" font-weight="bold" fill="#111" text-anchor="middle">Swale 7</text>
<text x="1073" y="578" font-size="12.5" font-weight="bold" fill="#111" text-anchor="middle">\_/ 150x300mm 1:3.0</text>
<text x="1076.5" y="586.5" font-size="11.5" font-weight="bold" fill="#111" text-anchor="middle">8</text>
<text x="1043" y="250.5" font-size="12" font-weight="bold" fill="#111" text-anchor="middle"></text>
<text x="946.5" y="593.6" font-size="12.5" font-weight="bold" fill="#111" text-anchor="middle">2.000</text>
<text x="946" y="608" font-size="12.5" font-weight="bold" fill="#111" text-anchor="middle">450mm</text>
<text x="966" y="625.5" font-size="12" font-weight="bold" fill="#111" text-anchor="middle">mm</text>
<text x="946" y="650" font-size="12.5" font-weight="bold" fill="#111" text-anchor="middle">2.000</text>
<text x="946" y="664" font-size="12" font-weight="bold" fill="#111" text-anchor="middle">450mm</text>
<text x="1055" y="636" font-size="12.5" font-weight="bold" fill="#111" text-anchor="middle">1.007</text>
<text x="1050" y="651" font-size="12.5" font-weight="bold" fill="#111" text-anchor="middle">450mm</text>
<text x="1066" y="667" font-size="11" font-weight="bold" fill="#111" text-anchor="middle">450mm</text>
<text x="1061" y="676.5" font-size="11" font-weight="bold" fill="#111" text-anchor="middle">300mm</text>
<text x="1033" y="691" font-size="12.5" font-weight="bold" fill="#111" text-anchor="middle">450mm</text>
<text x="905" y="716.5" font-size="12" font-weight="bold" fill="#111" text-anchor="middle">3.000</text>
<text x="925" y="708.5" font-size="11" font-weight="bold" fill="#111" text-anchor="middle">1.000 450mm</text>
<text x="903" y="728" font-size="12.5" font-weight="bold" fill="#111" text-anchor="middle">300mm</text>
<polyline points="1018.5,171 1029,204 1043,247 1050,273 1061,322 1069,391 1071,460 1073,530 1074,575 1054.8,604 1033.6,643.6 1017,666" fill="none" stroke="#7d8aa6" stroke-width="4.6" />
<polyline points="1018.5,171 1029,204 1043,247 1050,273 1061,322 1069,391 1071,460 1073,530 1074,575 1054.8,604 1033.6,643.6 1017,666" fill="none" stroke="#a9c3ee" stroke-width="2.6" />
<polyline points="946.6,561 952,617 959.6,656.6" fill="none" stroke="#7d8aa6" stroke-width="4.2" />
<polyline points="946.6,561 952,617 959.6,656.6" fill="none" stroke="#a9c3ee" stroke-width="2.2" />
<use href="#orf" x="708.5" y="206"/>
<use href="#dot" x="718.3" y="220.6"/>
<use href="#orf" x="708.5" y="308"/>
<use href="#dot" x="718" y="322.5"/>
<use href="#orf" x="708.5" y="388"/>
<use href="#dot" x="718.6" y="403.3"/>
<use href="#dot" x="736.5" y="383"/>
<use href="#orf" x="770.6" y="352"/>
<use href="#dot" x="780.5" y="367.5"/>
<use href="#orf" x="883.8" y="353.4"/>
<use href="#dot" x="893" y="368"/>
<use href="#orf" x="937.5" y="325.6"/>
<use href="#dot" x="947" y="340.5"/>
<use href="#orf" x="937.2" y="395.4"/>
<use href="#dot" x="946.5" y="410"/>
<use href="#orf" x="942" y="479.8"/>
<use href="#dot" x="952" y="494.5"/>
<circle cx="1018.5" cy="171.2" r="2.8" fill="#fff" stroke="#000" stroke-width="2"/>
<use href="#swale" x="1029.2" y="204"/>
<use href="#dot" x="1039.2" y="219"/>
<use href="#swale" x="1043" y="247"/>
<use href="#dot" x="1053" y="262"/>
<use href="#swale" x="1050" y="273.5"/>
<use href="#dot" x="1060" y="288.5"/>
<use href="#swale" x="1060.7" y="322"/>
<use href="#dot" x="1070.7" y="337"/>
<use href="#swale" x="1069" y="391.5"/>
<use href="#dot" x="1079" y="406.5"/>
<use href="#swale" x="1071.7" y="459.3"/>
<use href="#dot" x="1081.7" y="474.3"/>
<use href="#swale" x="1072.7" y="530.9"/>
<use href="#dot" x="1082.7" y="545.9"/>
<circle cx="1069.6" cy="426" r="2.6" fill="#a04848" stroke="#222" stroke-width="1"/>
<circle cx="1072.3" cy="494.5" r="2.6" fill="#a04848" stroke="#222" stroke-width="1"/>
<circle cx="1072.7" cy="568.7" r="2.6" fill="#a04848" stroke="#222" stroke-width="1"/>
<use href="#mh" x="946.6" y="561.3"/>
<use href="#dot" x="956.8000000000001" y="576.0999999999999"/>
<use href="#mh" x="952" y="616.8"/>
<use href="#dot" x="962.2" y="631.5999999999999"/>
<use href="#mh" x="1054.8" y="603.8"/>
<use href="#dot" x="1065.0" y="618.5999999999999"/>
<use href="#mh" x="1033.6" y="643.6"/>
<use href="#dot" x="1043.8" y="658.4"/>
<use href="#orf" x="959.6" y="656.6"/>
<use href="#dot" x="969.7" y="671.4"/>
<use href="#orf" x="1017" y="665.8"/>
<use href="#dot" x="1028" y="681.5"/>
<circle cx="904" cy="680.6" r="18" fill="#fff" stroke="#000" stroke-width="3"/>
<circle cx="907.8" cy="673" r="18" fill="#fff" stroke="#000" stroke-width="3"/>
<path d="M893,686 L893,664 C896,656 903,657 910,660 C916,664 919,670 921,680 L921,686 Z" fill="#6a9be6"/><path d="M896,680 C897,668 903,662 912,666 M899,672 C904,664 912,668 915,676" fill="none" stroke="#dce8ff" stroke-width="1.2"/>
<path d="M893,684 h28 M907,672 v12" stroke="#333" stroke-width="2"/>
<use href="#dot" x="913" y="688"/>
<use href="#dot" x="918" y="681"/>
<use href="#dot" x="923.5" y="687.5"/>
</g>
<path d="M566,133 V710.5 H1205.5 V133" fill="none" stroke="#000" stroke-width="2.6"/>
<text x="903" y="728" font-size="12.5" font-weight="bold" fill="#111" text-anchor="middle">300mm</text>
<path d="M666.5,527.5 L666.5,543.5 L670.5,540 L673.5,545.5 L675.8,544 L673,539.5 L677.5,539.5 Z" fill="#fff" stroke="#000" stroke-width="1" stroke-linejoin="round"/>
</svg>
<div class="a" style="left:1500px;top:133px;width:340px;height:31px;background:#e7e7e7;border:2px solid #1a1a1a;border-radius:1px"></div>

<svg style="left:0;top:743px" width="970" height="284" viewBox="0 743 970 284">
<rect x="0" y="743" width="29.5" height="284" fill="#f0f0f0"/>
<rect x="0" y="748.4" width="22.4" height="23.800000000000068" fill="#b9d5f2"/>
<rect x="0" y="777.8" width="22.4" height="22.200000000000045" fill="#b9d5f2"/>
<rect x="0" y="959.6" width="22.4" height="23.799999999999955" fill="#b9d5f2"/>
<rect x="0" y="986" width="22.4" height="25" fill="#b9d5f2"/>
<path d="M5,858.9 h16 M5,1017 h16" stroke="#c8c8c8" stroke-width="1"/>
<path d="M1.8,752 V766 M20.2,754 V771.5 M2,760 h5 l2,1 h5 l2,1.5 h4.5 M2,766 h5 l2,1.2 h5 l2,1.5 h4.5" fill="none" stroke="#1a1a1a" stroke-width="1.5"/>
<path d="M2.2,779.5 v17.2 h17.5" fill="none" stroke="#1a1a1a" stroke-width="1.5"/><path d="M2.2,783 h1.2 M2.2,787 h1.2 M2.2,791 h1.2" stroke="#1a1a1a" stroke-width="0.8"/><path d="M7,791 L10.3,785.5 L14.8,790 L18.8,782.5" fill="none" stroke="#1a1a1a" stroke-width="1.5"/>
<g fill="#1a1a1a"><circle cx="7" cy="791" r="1.5"/><circle cx="10.3" cy="785.5" r="1.5"/><circle cx="14.8" cy="790" r="1.5"/><circle cx="18.8" cy="782.5" r="1.5"/></g>
<path d="M3,807 L11,815 L19,825 M11,815 L14,807 M11,815 L4,820" fill="none" stroke="#222" stroke-width="1.5"/>
<g fill="#1a1a1a"><circle cx="3" cy="807" r="1.8"/><circle cx="14" cy="807" r="1.8"/><circle cx="4" cy="820" r="1.8"/><circle cx="19" cy="825" r="1.8"/><circle cx="11" cy="815" r="1.3"/></g>
<path d="M5,841 L15,836 A4,4 0 0 1 17,843 L8,847" fill="none" stroke="#555" stroke-width="1.4"/><circle cx="6.5" cy="844" r="3.8" fill="none" stroke="#555" stroke-width="1.4"/>
<rect x="11" y="843" width="10" height="10" fill="#222"/><path d="M12,846 h8 M12,848.5 h8 M12,851 h8 M13.5,844 v9 M16,844 v9 M18.5,844 v9" stroke="#fff" stroke-width="0.6"/>
<path d="M3,883 L9.5,876.5" stroke="#111" stroke-width="1.6"/><path d="M6.5,873 L17,882 L17.5,879 L13.5,875 L17,869.5 L19.5,870 L20,868 L14.5,864.5 L13.5,866.5 L14,868 L9.5,872 Z" fill="#111"/>
<circle cx="11" cy="902" r="9.3" fill="none" stroke="#222" stroke-width="1.5"/><path d="M5.5,902 h11 M11,896.5 v11" stroke="#222" stroke-width="1.6"/>
<text x="11" y="929" font-size="13" fill="#222" text-anchor="middle">10</text>
<circle cx="11" cy="945.6" r="9.3" fill="none" stroke="#222" stroke-width="1.5"/><path d="M5.5,945.6 h11" stroke="#222" stroke-width="1.6"/>
<path d="M1.8,962.5 V976.5 M20.2,964.5 V982 M2,970.5 h5 l2,1 h5 l2,1.5 h4.5 M2,976.5 h5 l2,1.2 h5 l2,1.5 h4.5" fill="none" stroke="#1a1a1a" stroke-width="1.5"/><circle cx="15" cy="966.5" r="1.8" fill="#1a1a1a"/>
<path d="M4,989 v13 a4,4 0 0 0 4,4 h8 a4,4 0 0 0 4,-4 v-13" fill="none" stroke="#222" stroke-width="1.5"/><path d="M6,997 c2,-1.5 3,1.5 5,0 c2,-1.5 3,1.5 5,0" fill="none" stroke="#222" stroke-width="1"/>
<rect x="30" y="743" width="940" height="284" fill="#fff"/>
<path d="M93.8,758 V1005" stroke="#dcdfe6" stroke-width="1" stroke-dasharray="3,3"/>
<text x="93.8" y="1016" font-size="10" font-weight="bold" fill="#8a8a8a" text-anchor="middle">0.00</text>
<path d="M175.1,758 V1005" stroke="#dcdfe6" stroke-width="1" stroke-dasharray="3,3"/>
<text x="175.1" y="1016" font-size="10" font-weight="bold" fill="#8a8a8a" text-anchor="middle">25.00</text>
<path d="M256.3,758 V1005" stroke="#dcdfe6" stroke-width="1" stroke-dasharray="3,3"/>
<text x="256.3" y="1016" font-size="10" font-weight="bold" fill="#8a8a8a" text-anchor="middle">50.00</text>
<path d="M337.6,758 V1005" stroke="#dcdfe6" stroke-width="1" stroke-dasharray="3,3"/>
<text x="337.6" y="1016" font-size="10" font-weight="bold" fill="#8a8a8a" text-anchor="middle">75.00</text>
<path d="M418.8,758 V1005" stroke="#dcdfe6" stroke-width="1" stroke-dasharray="3,3"/>
<text x="418.8" y="1016" font-size="10" font-weight="bold" fill="#8a8a8a" text-anchor="middle">100.00</text>
<path d="M500.1,758 V1005" stroke="#dcdfe6" stroke-width="1" stroke-dasharray="3,3"/>
<text x="500.1" y="1016" font-size="10" font-weight="bold" fill="#8a8a8a" text-anchor="middle">125.00</text>
<path d="M581.4,758 V1005" stroke="#dcdfe6" stroke-width="1" stroke-dasharray="3,3"/>
<text x="581.4" y="1016" font-size="10" font-weight="bold" fill="#8a8a8a" text-anchor="middle">150.00</text>
<path d="M662.6,758 V1005" stroke="#dcdfe6" stroke-width="1" stroke-dasharray="3,3"/>
<text x="662.6" y="1016" font-size="10" font-weight="bold" fill="#8a8a8a" text-anchor="middle">175.00</text>
<path d="M743.9,758 V1005" stroke="#dcdfe6" stroke-width="1" stroke-dasharray="3,3"/>
<text x="743.9" y="1016" font-size="10" font-weight="bold" fill="#8a8a8a" text-anchor="middle">200.00</text>
<path d="M825.1,758 V1005" stroke="#dcdfe6" stroke-width="1" stroke-dasharray="3,3"/>
<text x="825.1" y="1016" font-size="10" font-weight="bold" fill="#8a8a8a" text-anchor="middle">225.00</text>
<path d="M906.4,758 V1005" stroke="#dcdfe6" stroke-width="1" stroke-dasharray="3,3"/>
<text x="906.4" y="1016" font-size="10" font-weight="bold" fill="#8a8a8a" text-anchor="middle">250.00</text>
<path d="M80,777.5 H935" stroke="#dcdfe6" stroke-width="1" stroke-dasharray="3,3"/>
<text x="76" y="781.2" font-size="10" font-weight="bold" fill="#8a8a8a" text-anchor="end">46.50</text>
<path d="M80,823.6 H935" stroke="#dcdfe6" stroke-width="1" stroke-dasharray="3,3"/>
<text x="76" y="827.3" font-size="10" font-weight="bold" fill="#8a8a8a" text-anchor="end">45.75</text>
<path d="M80,869.7 H935" stroke="#dcdfe6" stroke-width="1" stroke-dasharray="3,3"/>
<text x="76" y="873.4" font-size="10" font-weight="bold" fill="#8a8a8a" text-anchor="end">45.00</text>
<path d="M80,915.8 H935" stroke="#dcdfe6" stroke-width="1" stroke-dasharray="3,3"/>
<text x="76" y="919.5" font-size="10" font-weight="bold" fill="#8a8a8a" text-anchor="end">44.25</text>
<path d="M80,961.9 H935" stroke="#dcdfe6" stroke-width="1" stroke-dasharray="3,3"/>
<text x="76" y="965.6" font-size="10" font-weight="bold" fill="#8a8a8a" text-anchor="end">43.50</text>
<path d="M80,1008.0 H935" stroke="#dcdfe6" stroke-width="1" stroke-dasharray="3,3"/>
<text x="76" y="1011.7" font-size="10" font-weight="bold" fill="#8a8a8a" text-anchor="end">42.75</text>
<polygon points="94.3,815 630.7,826 630.7,842.5 500,840 345,835.5 94.3,832.7" fill="#fff"/>
<polygon points="188,822 630.7,836 630.7,842.5 500,840 345,835.5 188,834" fill="#dfe3ea"/>
<polygon points="94.3,828 345,829.8 500,834 582,833 629,842.4 630.7,842.5 500,840 345,835.5 94.3,832.7" fill="#eef1f6"/>
<polyline points="94.3,828 345,829.8 500,834 582,833 629,842.4" fill="none" stroke="#6a9ae0" stroke-width="2.2"/>
<polyline points="94.3,832.7 345,835.5 500,840 630.7,842.5" fill="none" stroke="#111" stroke-width="1.6"/>
<polyline points="94.3,815 345,818 500,822 630.7,826" fill="none" stroke="#111" stroke-width="1.2" stroke-dasharray="3,2"/>
<path d="M94.3,813.0 V832.7" stroke="#111" stroke-width="1.8"/>
<path d="M188.2,815.1 V834.4" stroke="#111" stroke-width="1.8"/>
<path d="M203.2,815.4 V834.7" stroke="#111" stroke-width="1.8"/>
<path d="M253,816.6 V835.6" stroke="#111" stroke-width="1.8"/>
<path d="M350.5,818.7 V837.4" stroke="#111" stroke-width="1.8"/>
<path d="M442,820.8 V839.1" stroke="#111" stroke-width="1.8"/>
<path d="M534,822.8 V840.7" stroke="#111" stroke-width="1.8"/>
<polygon points="630.7,824.5 728.7,838.8 728.7,939.7 630.7,924" fill="#fff" stroke="#111" stroke-width="1.5"/>
<polygon points="630.7,917 728.7,931 728.7,939.7 630.7,924" fill="#d5dae0"/>
<path d="M630.7,897 L728.7,911.2 M630.7,924 L728.7,939.7" stroke="#111" stroke-width="1.5"/>
<rect x="728.7" y="838.8" width="15.1" height="100.9" fill="#fff" stroke="#111" stroke-width="1.5"/>
<polygon points="758.6,845.9 832.5,861.5 832.5,971 758.6,965.2" fill="#f8ddb3"/>
<rect x="743.8" y="844.4" width="14.8" height="120.8" fill="#fff" stroke="#111" stroke-width="1.5"/>
<path d="M758.6,965.2 L832.5,971" stroke="#b03a2e" stroke-width="2.2" stroke-dasharray="5,3"/>
<rect x="833.5" y="863.5" width="12.5" height="107" fill="#fff" stroke="#111" stroke-width="3"/>
<path d="M846,868 L859.5,868.6 V965 L846,960" fill="#fff" stroke="#555" stroke-width="1"/>
<rect x="859.5" y="868.6" width="14.2" height="103.8" fill="#fff" stroke="#111" stroke-width="1.5"/>
<path d="M846,964 L859.5,972 h14" stroke="#6a9ae0" stroke-width="2"/>
<path d="M630.7,892.8 H846.7" stroke="#6a9ae0" stroke-width="2"/>
<rect x="751.5" y="955.3" width="10" height="10" fill="#fff" stroke="#111" stroke-width="1.3"/><path d="M751.5,955.3 l10,10 M761.5,955.3 l-10,10" stroke="#111" stroke-width="1"/>
<rect x="834.5" y="886.5" width="10" height="10" fill="#fff" stroke="#111" stroke-width="1.3"/><path d="M834.5,886.5 l10,10 M844.5,886.5 l-10,10" stroke="#111" stroke-width="1"/>
<rect x="839" y="960.5" width="10" height="10" fill="#fff" stroke="#111" stroke-width="1.3"/><path d="M839,960.5 l10,10 M849,960.5 l-10,10" stroke="#111" stroke-width="1"/>
<polyline points="94.3,812.3 345,816.3 500,820.3 630.7,824.5 728.7,838.8 832.5,861.5 873.7,868.6" fill="none" stroke="#1f7a1f" stroke-width="1.8"/>
<text x="95.3" y="796.8" font-size="13" font-weight="normal" fill="#111" text-anchor="start">1</text>
<text x="94.3" y="808.3" font-size="13" font-weight="normal" fill="#111" text-anchor="start">Junction</text>
<text x="189.2" y="798.9356823266219" font-size="13" font-weight="normal" fill="#111" text-anchor="start">2</text>
<text x="188.2" y="810.4356823266219" font-size="13" font-weight="normal" fill="#111" text-anchor="start">Junction</text>
<text x="204.2" y="799.2768456375838" font-size="13" font-weight="normal" fill="#111" text-anchor="start">3</text>
<text x="203.2" y="810.7768456375838" font-size="13" font-weight="normal" fill="#111" text-anchor="start">Junction</text>
<text x="254" y="800.4095078299775" font-size="13" font-weight="normal" fill="#111" text-anchor="start">4</text>
<text x="253" y="811.9095078299775" font-size="13" font-weight="normal" fill="#111" text-anchor="start">Junction</text>
<text x="351.5" y="802.6270693512304" font-size="13" font-weight="normal" fill="#111" text-anchor="start">5</text>
<text x="350.5" y="814.1270693512304" font-size="13" font-weight="normal" fill="#111" text-anchor="start">Junction</text>
<text x="443" y="804.7081655480985" font-size="13" font-weight="normal" fill="#111" text-anchor="start">6</text>
<text x="442" y="816.2081655480985" font-size="13" font-weight="normal" fill="#111" text-anchor="start">Junction</text>
<text x="535" y="806.8006338553319" font-size="13" font-weight="normal" fill="#111" text-anchor="start">7</text>
<text x="534" y="818.3006338553319" font-size="13" font-weight="normal" fill="#111" text-anchor="start">Junction</text>
<text x="126.25" y="798.0270507084265" font-size="13" font-weight="normal" fill="#111" text-anchor="start">Swale 1</text>
<text x="127.25" y="809.0270507084265" font-size="13" font-weight="normal" fill="#111" text-anchor="start">\_/ 150x300mm 1:3.0</text>
<text x="180.7" y="799.2654735272184" font-size="13" font-weight="normal" fill="#111" text-anchor="start">Swale 2</text>
<text x="181.7" y="810.2654735272184" font-size="13" font-weight="normal" fill="#111" text-anchor="start">\_/ 150x300mm 1:3.0</text>
<text x="213.1" y="800.0023862788963" font-size="13" font-weight="normal" fill="#111" text-anchor="start">Swale 3</text>
<text x="214.1" y="811.0023862788963" font-size="13" font-weight="normal" fill="#111" text-anchor="start">\_/ 150x300mm 1:3.0</text>
<text x="286.75" y="801.6774981357196" font-size="13" font-weight="normal" fill="#111" text-anchor="start">Swale 4</text>
<text x="287.75" y="812.6774981357196" font-size="13" font-weight="normal" fill="#111" text-anchor="start">\_/ 150x300mm 1:3.0</text>
<text x="381.25" y="803.82682699478" font-size="13" font-weight="normal" fill="#111" text-anchor="start">Swale 5</text>
<text x="382.25" y="814.82682699478" font-size="13" font-weight="normal" fill="#111" text-anchor="start">\_/ 150x300mm 1:3.0</text>
<text x="473.0" y="805.9136092468307" font-size="13" font-weight="normal" fill="#111" text-anchor="start">Swale 6</text>
<text x="474.0" y="816.9136092468307" font-size="13" font-weight="normal" fill="#111" text-anchor="start">\_/ 150x300mm 1:3.0</text>
<text x="737" y="832" font-size="13" font-weight="normal" fill="#111" text-anchor="start">1350mm</text>
<text x="752" y="841" font-size="13" font-weight="normal" fill="#111" text-anchor="start">1350mm</text>
<text x="839.6" y="846" font-size="13" font-weight="normal" fill="#111" text-anchor="start">FTP</text>
<text x="866" y="852" font-size="13" font-weight="normal" fill="#111" text-anchor="start">14</text>
<text x="839.6" y="861" font-size="13" font-weight="normal" fill="#111" text-anchor="start">1500mm</text>
<text x="867" y="866" font-size="13" font-weight="normal" fill="#111" text-anchor="start">1200mm</text>
<text x="666" y="884" font-size="13" font-weight="normal" fill="#111" text-anchor="start">1.007</text>
<text x="666" y="899" font-size="13" font-weight="normal" fill="#111" text-anchor="start">450mm</text>
<text x="848" y="936" font-size="13" font-weight="normal" fill="#111" text-anchor="start">3.000</text>
<text x="848" y="950" font-size="13" font-weight="normal" fill="#111" text-anchor="start">300mm</text>
<rect x="859.5" y="868.6" width="14.2" height="103.8" fill="#fff" stroke="#111" stroke-width="1.5"/>
<path d="M846,964 L859.5,972 h14" stroke="#6a9ae0" stroke-width="2"/>
<text x="851" y="970" font-size="10" font-weight="normal" fill="#111" text-anchor="start">3.000</text>
<rect x="572" y="752" width="391" height="71" fill="#fff" stroke="#111" stroke-width="2"/>
<text x="584" y="773" font-size="14.9" font-weight="bold" fill="#111" text-anchor="start">100 year +40% CC 120 minute winter, t=126 minutes</text>
<text x="932" y="805" font-size="12.5" font-weight="bold" fill="#111" text-anchor="end">Water level</text>
<path d="M937.6,807.5 L951.9,794.7" stroke="#6a9ae0" stroke-width="2"/>
</svg>
<svg style="left:975px;top:743px" width="851" height="284" viewBox="975 743 851 284">
<rect x="975" y="743" width="851" height="284" fill="#fff"/>
<text x="1039.6" y="999.5" font-size="10" font-weight="bold" fill="#8a8a8a" text-anchor="middle">0</text>
<path d="M1134.8,758 V987" stroke="#d8dde8" stroke-width="1" stroke-dasharray="3,3"/>
<text x="1134.8" y="999.5" font-size="10" font-weight="bold" fill="#8a8a8a" text-anchor="middle">40</text>
<path d="M1230.0,758 V987" stroke="#d8dde8" stroke-width="1" stroke-dasharray="3,3"/>
<text x="1230.0" y="999.5" font-size="10" font-weight="bold" fill="#8a8a8a" text-anchor="middle">80</text>
<path d="M1325.2,758 V987" stroke="#d8dde8" stroke-width="1" stroke-dasharray="3,3"/>
<text x="1325.2" y="999.5" font-size="10" font-weight="bold" fill="#8a8a8a" text-anchor="middle">120</text>
<path d="M1420.4,758 V987" stroke="#d8dde8" stroke-width="1" stroke-dasharray="3,3"/>
<text x="1420.4" y="999.5" font-size="10" font-weight="bold" fill="#8a8a8a" text-anchor="middle">160</text>
<path d="M1515.6,758 V987" stroke="#d8dde8" stroke-width="1" stroke-dasharray="3,3"/>
<text x="1515.6" y="999.5" font-size="10" font-weight="bold" fill="#8a8a8a" text-anchor="middle">200</text>
<path d="M1610.8,758 V987" stroke="#d8dde8" stroke-width="1" stroke-dasharray="3,3"/>
<text x="1610.8" y="999.5" font-size="10" font-weight="bold" fill="#8a8a8a" text-anchor="middle">240</text>
<path d="M1706.0,758 V987" stroke="#d8dde8" stroke-width="1" stroke-dasharray="3,3"/>
<text x="1706.0" y="999.5" font-size="10" font-weight="bold" fill="#8a8a8a" text-anchor="middle">280</text>
<path d="M1801.2,758 V987" stroke="#d8dde8" stroke-width="1" stroke-dasharray="3,3"/>
<text x="1801.2" y="999.5" font-size="10" font-weight="bold" fill="#8a8a8a" text-anchor="middle">320</text>
<text x="1033.5" y="991.1" font-size="10" font-weight="bold" fill="#8a8a8a" text-anchor="end">0.00</text>
<path d="M1040,945.4 H1826" stroke="#d8dde8" stroke-width="1" stroke-dasharray="3,3"/>
<text x="1033.5" y="949.1" font-size="10" font-weight="bold" fill="#8a8a8a" text-anchor="end">6.00</text>
<path d="M1040,903.5 H1826" stroke="#d8dde8" stroke-width="1" stroke-dasharray="3,3"/>
<text x="1033.5" y="907.2" font-size="10" font-weight="bold" fill="#8a8a8a" text-anchor="end">12.00</text>
<path d="M1040,861.5 H1826" stroke="#d8dde8" stroke-width="1" stroke-dasharray="3,3"/>
<text x="1033.5" y="865.2" font-size="10" font-weight="bold" fill="#8a8a8a" text-anchor="end">18.00</text>
<path d="M1040,819.6 H1826" stroke="#d8dde8" stroke-width="1" stroke-dasharray="3,3"/>
<text x="1033.5" y="823.3" font-size="10" font-weight="bold" fill="#8a8a8a" text-anchor="end">24.00</text>
<path d="M1040,777.6 H1826" stroke="#d8dde8" stroke-width="1" stroke-dasharray="3,3"/>
<text x="1033.5" y="781.3" font-size="10" font-weight="bold" fill="#8a8a8a" text-anchor="end">30.00</text>
<rect x="1336.6" y="778" width="5.7" height="209" fill="#dfe4ea"/>
<polyline points="1039.6,987.4 1059.5,987.4 1070.9,984.6 1079.4,973.8 1093.6,948.2 1110.7,919.8 1130.6,888.5 1159,848.7 1176,820.3 1185,813.5 1193.1,811.2 1200.2,811.2 1215.8,820.3 1234.3,835.9 1244.2,828.8 1267,817.4 1289.7,810.3 1315.3,808 1363.6,808 1372.2,809.5 1394.9,809.5 1403.4,810.6 1419.6,810.6 1570.4,824.1 1614,828 1677.4,834 1713,836.8 1756.7,832 1801,826 1826,824.1" fill="none" stroke="#6b9be2" stroke-width="2.4" stroke-linejoin="round"/>
<path d="M1039.6,757.7 V987.4 H1826" fill="none" stroke="#111" stroke-width="2"/>
<text x="1468" y="1019" font-size="12.5" font-weight="bold" fill="#111" text-anchor="middle">Time (mins)</text>
<rect x="1421.5" y="752" width="420" height="71" fill="#fff" stroke="#111" stroke-width="2"/>
<text x="1433.7" y="773" font-size="14.9" font-weight="bold" fill="#111">Link FTP-14 (ACO Q-Brake), 100 year +40% CC 120 minute winter</text>
<text x="1806" y="805" font-size="12.5" font-weight="bold" fill="#111">Outflow</text>
</svg>
</body></html>
